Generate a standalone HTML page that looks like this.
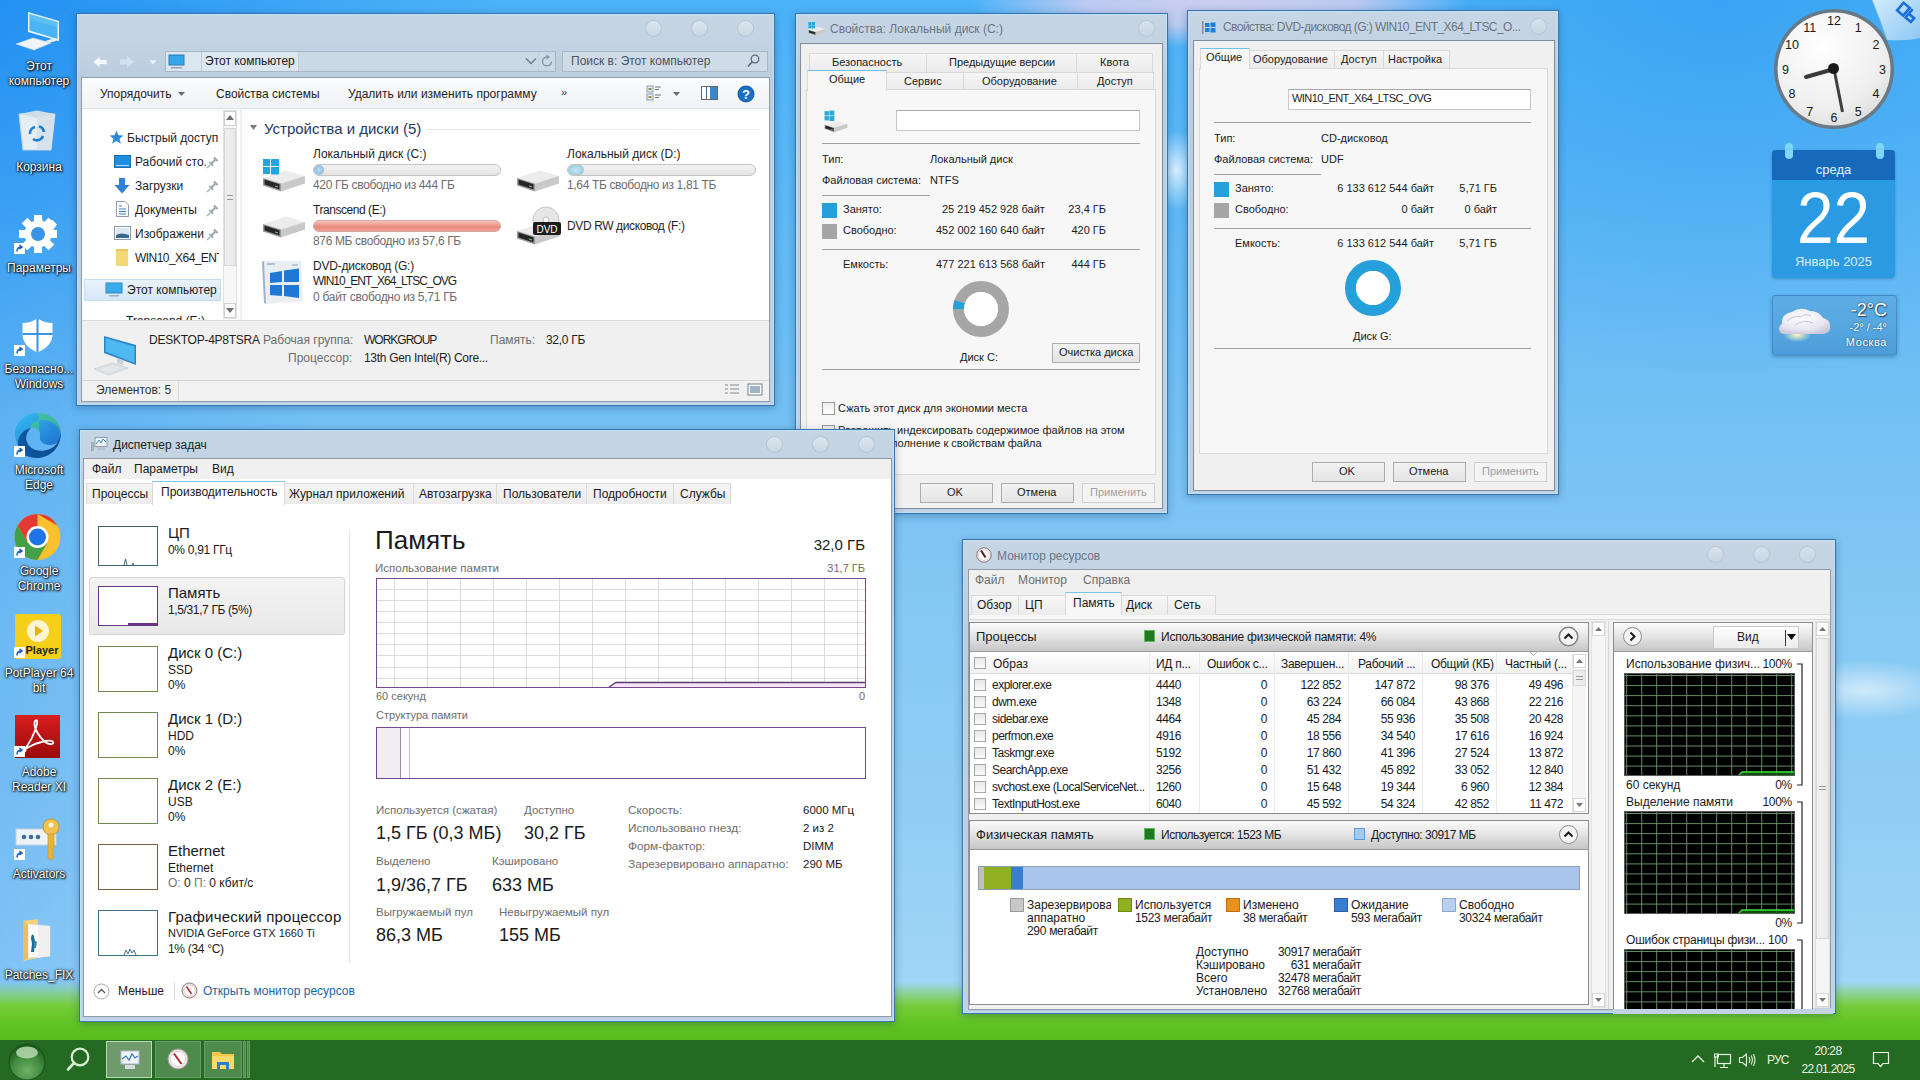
<!DOCTYPE html>
<html><head><meta charset="utf-8">
<style>
*{box-sizing:border-box;margin:0;padding:0}
html,body{width:1920px;height:1080px;overflow:hidden}
body{position:relative;font-family:"Liberation Sans",sans-serif;font-size:12px;color:#1a1a1a;
background:radial-gradient(ellipse 250px 48px at 1220px 0px,rgba(206,206,240,1) 0,rgba(206,206,240,.85) 55%,rgba(206,206,240,0) 100%),radial-gradient(ellipse 30px 40px at 1176px 170px,rgba(255,255,255,.75),rgba(255,255,255,0)),radial-gradient(ellipse 90px 30px at 1865px 690px,rgba(255,255,255,.6),rgba(255,255,255,0)),radial-gradient(ellipse 500px 420px at 0px 0px,rgba(0,115,238,.42),rgba(0,115,238,0)),radial-gradient(ellipse 420px 380px at 1720px 0px,rgba(20,135,235,.32),rgba(20,135,235,0)),linear-gradient(90deg,rgba(0,120,240,.2) 0px,rgba(0,120,240,0) 320px),linear-gradient(180deg,#4ab2f8 0px,#5cb8f6 200px,#74c0f4 420px,#84c8f4 600px,#90cdf4 800px,#a0d6f8 985px,#a0d6f8 1040px)}
.a{position:absolute}
.t{position:absolute;white-space:nowrap;line-height:1}
.win{position:absolute;border:1px solid #3f70a8;background:linear-gradient(180deg,#c7d6e5 0,#c3d3e3 30px,#bccde0 62px,#c0d1e3 100%);
 box-shadow:0 0 0 1px rgba(185,230,255,.85) inset,0 2px 8px rgba(0,40,90,.3)}
.cbtn{position:absolute;width:17px;height:17px;border-radius:50%;border:1px solid #b4c3d2;background:linear-gradient(#dde6ef,#c9d6e3)}
.ttl{position:absolute;font-size:12px;color:#3a3a3a;white-space:nowrap}
.dicon{position:absolute;width:78px;text-align:center;color:#fff;font-size:12px;line-height:15px;text-shadow:0 0 3px rgba(0,0,0,.9),1px 1px 2px #000,0 0 1px #000}
</style></head><body>

<!-- grass texture band -->
<div class="a" style="left:0;top:982px;width:1920px;height:58px;background:linear-gradient(180deg,rgba(140,210,120,0) 0,rgba(130,210,100,.7) 12px,#74cc38 24px,#62c424 42px,#58bc1c 58px)"></div>


<!-- desktop icons -->
<svg class="a" style="left:15px;top:11px" width="45" height="42" viewBox="0 0 45 42"><path d="M13 1 L44 10 L44 30 L13 21Z" fill="#e8f4fc"/><path d="M14.5 3 L42.5 11 L42.5 28 L14.5 19.5Z" fill="#4ab4f4"/><path d="M14.5 3 L42.5 11 L42.5 16 L14.5 9Z" fill="#6cc6f8" opacity=".6"/><path d="M30 30 L40 27 L44 29 L34 32Z" fill="#e9eef2"/><path d="M1 33 L18 27 L36 32 L19 39Z" fill="#f2f5f8" stroke="#cdd5dc" stroke-width="0.6"/></svg>
<div class="dicon" style="left:0;top:59.0px">Этот</div><div class="dicon" style="left:0;top:73.5px">компьютер</div>
<svg class="a" style="left:18px;top:110px" width="38" height="41" viewBox="0 0 38 41"><path d="M1 4 L37 4 L33 40 L5 40Z" fill="#e6eef5" stroke="#c4d3df" stroke-width="1"/><path d="M1 4 L19 0.5 L37 4 L19 8Z" fill="#cfdde8"/><path d="M19 8 L37 4 L33 40 L19 40Z" fill="#d7e3ec"/><g fill="none" stroke="#1e7fd0" stroke-width="2.6"><path d="M12 24 A6.5 6.5 0 0 1 17 17"/><path d="M21 16.5 A6.5 6.5 0 0 1 26 22"/><path d="M25 26 A6.5 6.5 0 0 1 15 29"/></g></svg>
<div class="dicon" style="left:0;top:160.0px">Корзина</div>
<svg class="a" style="left:18px;top:214px" width="40" height="40" viewBox="0 0 40 40"><g transform="translate(20,20)"><path d="M-3.5 -19 L3.5 -19 L4.5 -13 L9 -11 L14 -14.5 L19 -9.5 L15.5 -4.5 L17.5 0 L17.5 0" fill="#fff"/><circle r="13.5" fill="#fff"/><g fill="#fff"><rect x="-4" y="-19" width="8" height="9"/><rect x="-4" y="-19" width="8" height="9" transform="rotate(45)"/><rect x="-4" y="-19" width="8" height="9" transform="rotate(90)"/><rect x="-4" y="-19" width="8" height="9" transform="rotate(135)"/><rect x="-4" y="-19" width="8" height="9" transform="rotate(180)"/><rect x="-4" y="-19" width="8" height="9" transform="rotate(225)"/><rect x="-4" y="-19" width="8" height="9" transform="rotate(270)"/><rect x="-4" y="-19" width="8" height="9" transform="rotate(315)"/></g><circle r="7" fill="#3a93e4"/></g></svg>
<svg class="a" style="left:14px;top:243px" width="11" height="11" viewBox="0 0 11 11"><rect x="0" y="0" width="11" height="11" fill="#fff"/><path d="M3 8.5 Q3 4 7.5 4 M5.5 2 L8 4 L5.5 6" fill="none" stroke="#1a5fb4" stroke-width="1.5"/></svg><div class="dicon" style="left:0;top:261.0px">Параметры</div>
<svg class="a" style="left:22px;top:318px" width="31" height="35" viewBox="0 0 31 35"><path d="M15.5 0.5 Q23 5 30.5 5 L30.5 16 Q30.5 28 15.5 34.5 Q0.5 28 0.5 16 L0.5 5 Q8 5 15.5 0.5Z" fill="#fff"/><path d="M15.5 0.5 V34.5 M0.5 16 H30.5" stroke="#3a93e4" stroke-width="2"/></svg>
<svg class="a" style="left:14px;top:345px" width="11" height="11" viewBox="0 0 11 11"><rect x="0" y="0" width="11" height="11" fill="#fff"/><path d="M3 8.5 Q3 4 7.5 4 M5.5 2 L8 4 L5.5 6" fill="none" stroke="#1a5fb4" stroke-width="1.5"/></svg><div class="dicon" style="left:0;top:362.0px">Безопасно...</div><div class="dicon" style="left:0;top:376.5px">Windows</div>
<svg class="a" style="left:13px;top:411px" width="50" height="49" viewBox="0 0 50 49"><defs><linearGradient id="eg1" x1="0" y1="0" x2="1" y2="1"><stop offset="0" stop-color="#35c1f1"/><stop offset="1" stop-color="#1e6fd0"/></linearGradient><linearGradient id="eg2" x1="0" y1="0" x2="1" y2="0"><stop offset="0" stop-color="#0c59a4"/><stop offset="1" stop-color="#114a8b"/></linearGradient></defs><path d="M25 2 C38 2 48 11 48 23 C48 30 43 34 37 34 C30 34 26 30 27 25 C28 20 24 16 18 17 C10 18 4 26 5 34 C2 29 2 24 2 22 C3 10 13 2 25 2Z" fill="url(#eg1)"/><path d="M48 23 C47 38 36 47 24 47 C12 47 4 40 5 34 C4 26 10 18 18 17 C14 21 12 26 14 31 C17 39 27 42 37 38 C42 36 46 31 48 23Z" fill="url(#eg2)"/><path d="M25 2 C38 2 48 11 48 23 C46 14 38 9 30 9 C22 9 17 13 18 17 C24 16 28 20 27 25" fill="#4fd36a" opacity=".55"/></svg>
<svg class="a" style="left:14px;top:446px" width="11" height="11" viewBox="0 0 11 11"><rect x="0" y="0" width="11" height="11" fill="#fff"/><path d="M3 8.5 Q3 4 7.5 4 M5.5 2 L8 4 L5.5 6" fill="none" stroke="#1a5fb4" stroke-width="1.5"/></svg><div class="dicon" style="left:0;top:463.0px">Microsoft</div><div class="dicon" style="left:0;top:477.5px">Edge</div>
<svg class="a" style="left:13px;top:513px" width="49" height="48" viewBox="0 0 48 48"><circle cx="24" cy="24" r="23" fill="#fbc02d"/><path d="M24 1 A23 23 0 0 1 43.9 12.5 L24 12.5 Z M24 1 A23 23 0 0 0 4.1 12.5 L14 29.5 L24 12.5 L43.9 12.5" fill="#e53935"/><path d="M4.1 12.5 A23 23 0 0 0 24 47 L34 29.5 L24 35.5 L14 29.5Z" fill="#43a047"/><circle cx="24" cy="24" r="11" fill="#fff"/><circle cx="24" cy="24" r="8.5" fill="#1e73e8"/></svg>
<svg class="a" style="left:14px;top:547px" width="11" height="11" viewBox="0 0 11 11"><rect x="0" y="0" width="11" height="11" fill="#fff"/><path d="M3 8.5 Q3 4 7.5 4 M5.5 2 L8 4 L5.5 6" fill="none" stroke="#1a5fb4" stroke-width="1.5"/></svg><div class="dicon" style="left:0;top:564.0px">Google</div><div class="dicon" style="left:0;top:578.5px">Chrome</div>
<svg class="a" style="left:15px;top:614px" width="46" height="45" viewBox="0 0 46 45"><rect x="0" y="0" width="46" height="45" rx="3" fill="#f5cf1a"/><circle cx="23" cy="17" r="11" fill="#fff6d0"/><path d="M20 11.5 L28 17 L20 22.5Z" fill="#e6b400"/><text x="27" y="40" text-anchor="middle" font-family="Liberation Sans" font-weight="bold" font-size="11" fill="#222">Player</text></svg>
<svg class="a" style="left:14px;top:647px" width="11" height="11" viewBox="0 0 11 11"><rect x="0" y="0" width="11" height="11" fill="#fff"/><path d="M3 8.5 Q3 4 7.5 4 M5.5 2 L8 4 L5.5 6" fill="none" stroke="#1a5fb4" stroke-width="1.5"/></svg><div class="dicon" style="left:0;top:666.0px">PotPlayer 64</div><div class="dicon" style="left:0;top:680.5px">bit</div>
<svg class="a" style="left:15px;top:715px" width="45" height="43" viewBox="0 0 45 43"><defs><linearGradient id="ag" x1="0" y1="0" x2="0" y2="1"><stop offset="0" stop-color="#d81e1e"/><stop offset="1" stop-color="#9a0a0a"/></linearGradient></defs><rect x="0" y="0" width="45" height="43" fill="url(#ag)"/><path d="M8 36 C14 30 20 18 22 9 C23 4 20 4 19.5 8 C19 13 24 22 30 27 C34 30 39 30 38 27 C37 24 24 26 12 33 C7 36 8 39 11 35" fill="none" stroke="#fff" stroke-width="1.8"/></svg>
<svg class="a" style="left:14px;top:746px" width="11" height="11" viewBox="0 0 11 11"><rect x="0" y="0" width="11" height="11" fill="#fff"/><path d="M3 8.5 Q3 4 7.5 4 M5.5 2 L8 4 L5.5 6" fill="none" stroke="#1a5fb4" stroke-width="1.5"/></svg><div class="dicon" style="left:0;top:765.0px">Adobe</div><div class="dicon" style="left:0;top:779.5px">Reader XI</div>
<svg class="a" style="left:15px;top:818px" width="46" height="42" viewBox="0 0 46 42"><rect x="1" y="11" width="40" height="16" fill="#eef3f7" stroke="#c5d2dc"/><circle cx="9" cy="19" r="2.3" fill="#3a6d9a"/><circle cx="16" cy="19" r="2.3" fill="#3a6d9a"/><circle cx="23" cy="19" r="2.3" fill="#3a6d9a"/><circle cx="36" cy="9" r="8" fill="#f1c24f" stroke="#c89b2a"/><circle cx="36" cy="7" r="2.5" fill="#fff6d8"/><path d="M33 16 L33 40 L36 42 L39 39 L37 37 L39 34 L37 32 L39 30 L39 16Z" fill="#e9b43b" stroke="#c89b2a" stroke-width="0.8"/></svg>
<svg class="a" style="left:14px;top:849px" width="11" height="11" viewBox="0 0 11 11"><rect x="0" y="0" width="11" height="11" fill="#fff"/><path d="M3 8.5 Q3 4 7.5 4 M5.5 2 L8 4 L5.5 6" fill="none" stroke="#1a5fb4" stroke-width="1.5"/></svg><div class="dicon" style="left:0;top:867.0px">Activators</div>
<svg class="a" style="left:20px;top:918px" width="34" height="44" viewBox="0 0 34 44"><path d="M3 3 L18 1 L18 40 L3 43Z" fill="#f3d27a"/><path d="M8 6 L30 8 L30 38 L8 40Z" fill="#fbfbfb" stroke="#d8d8d8" stroke-width=".6"/><path d="M18 8 L30 8 L30 38 L18 40Z" fill="#f0f0f0"/><path d="M11 20 Q12 14 14 18 L15 24 L14 34 L11 34 L12 26Z" fill="#1e6e90"/><path d="M14 22 L17 24 L16 30 L14 30Z" fill="#2f8ab0"/><path d="M3 3 L8 6 L8 40 L3 43Z" fill="#e8c259"/></svg>
<div class="dicon" style="left:0;top:968.0px">Patches_FIX</div>


<!-- widgets -->
<svg class="a" style="left:1773px;top:8px" width="122" height="122" viewBox="-1 -1 122 122">
 <defs><radialGradient id="cf" cx="0.4" cy="0.3" r="0.8"><stop offset="0" stop-color="#ffffff"/><stop offset="0.7" stop-color="#eeeeee"/><stop offset="1" stop-color="#d8d8d8"/></radialGradient></defs>
 <circle cx="60" cy="60" r="60" fill="#6d737a" opacity=".9"/>
 <circle cx="60" cy="60" r="56.5" fill="url(#cf)"/>
 <g font-family="Liberation Sans" font-size="12.5" fill="#1a1a1a"><text x="84.2" y="22.5" text-anchor="middle">1</text><text x="102.0" y="40.2" text-anchor="middle">2</text><text x="108.5" y="64.5" text-anchor="middle">3</text><text x="102.0" y="88.7" text-anchor="middle">4</text><text x="84.2" y="106.5" text-anchor="middle">5</text><text x="60.0" y="113.0" text-anchor="middle">6</text><text x="35.7" y="106.5" text-anchor="middle">7</text><text x="18.0" y="88.8" text-anchor="middle">8</text><text x="11.5" y="64.5" text-anchor="middle">9</text><text x="18.0" y="40.2" text-anchor="middle">10</text><text x="35.7" y="22.5" text-anchor="middle">11</text><text x="60.0" y="16.0" text-anchor="middle">12</text></g>
 <path d="M60 60 L32 68" stroke="#3a3a3a" stroke-width="4" stroke-linecap="round"/>
 <path d="M60 60 L68.5 103" stroke="#3f3f3f" stroke-width="3"/>
 <circle cx="59.5" cy="59.5" r="5.5" fill="#1a1a1a"/>
</svg>
<!-- corner curl -->
<svg class="a" style="left:1870px;top:0" width="50" height="44" viewBox="0 0 50 44"><defs><linearGradient id="cg" x1="0" y1="0" x2="1" y2="1"><stop offset="0" stop-color="#d2ecfc"/><stop offset=".6" stop-color="#a9d6f6"/><stop offset="1" stop-color="#8cc8f4"/></linearGradient></defs><path d="M2 0 L50 0 L50 38 Q40 41 17 40 Q10 20 2 0Z" fill="url(#cg)"/><path d="M2 0 Q10 20 17 40" fill="none" stroke="#7fb2d8" stroke-width="1"/><g transform="translate(38,13) rotate(40)" fill="none" stroke="#1a6fe0" stroke-width="2.6"><rect x="-10" y="-5" width="8" height="10"/><path d="M1 -6 L1 5 L8 5 L8 0 L1 0"/></g></svg>

<!-- calendar -->
<div class="a" style="left:1785px;top:143px;width:8px;height:16px;border-radius:4px;background:#7fd6f5"></div>
<div class="a" style="left:1876px;top:143px;width:8px;height:16px;border-radius:4px;background:#7fd6f5"></div>
<div class="a" style="left:1772px;top:150px;width:123px;height:128px;border-radius:4px;background:#2a9be3;box-shadow:0 1px 3px rgba(0,60,120,.35);overflow:hidden">
 <div class="a" style="left:0;top:0;width:123px;height:30px;background:#1769bb"></div>
</div>
<div class="a" style="left:1785px;top:150px;width:8px;height:9px;border-radius:0 0 4px 4px;background:#7fd6f5"></div>
<div class="a" style="left:1876px;top:150px;width:8px;height:9px;border-radius:0 0 4px 4px;background:#7fd6f5"></div>
<div class="t" style="left:1772px;top:163px;width:123px;text-align:center;color:#e3f2fd;font-size:13px">среда</div>
<svg class="a" style="left:1772px;top:180px" width="123" height="70" viewBox="0 0 123 70"><text x="61.5" y="63" text-anchor="middle" font-family="Liberation Sans" font-size="73" fill="#fff" stroke="#2a9be3" stroke-width="2.2" paint-order="stroke" transform="translate(61.5,0) scale(.9,1) translate(-61.5,0)" style="paint-order:stroke fill">22</text></svg>
<div class="t" style="left:1772px;top:255px;width:123px;text-align:center;color:#d6eefc;font-size:13px">Январь 2025</div>

<!-- weather -->
<div class="a" style="left:1772px;top:295px;width:125px;height:60px;border-radius:3px;border:1px solid rgba(50,110,175,.45);background:linear-gradient(#5eace4,#55a6e0 60%,#4e9cd8);box-shadow:0 2px 4px rgba(0,50,100,.35)"></div>
<svg class="a" style="left:1777px;top:305px" width="56" height="38" viewBox="0 0 56 38"><defs><radialGradient id="wc" cx=".45" cy=".35" r=".7"><stop offset="0" stop-color="#ffffff"/><stop offset=".7" stop-color="#e6e4f0"/><stop offset="1" stop-color="#c8c6d8"/></radialGradient><radialGradient id="ws" cx=".5" cy=".5" r=".5"><stop offset="0" stop-color="#fff8c0"/><stop offset="1" stop-color="#fff8c0" stop-opacity="0"/></radialGradient></defs><ellipse cx="20" cy="30" rx="14" ry="7" fill="url(#ws)"/><path d="M3 27 Q0 22 5 19 Q4 9 15 7 Q24 1 33 6 Q42 6 46 13 Q54 15 53 22 Q54 28 46 29 L8 29 Q4 29 3 27Z" fill="url(#wc)"/><path d="M10 16 Q16 10 24 12 Q28 8 34 11 M18 20 Q26 14 36 18" fill="none" stroke="#b9b6cc" stroke-width="1" opacity=".8"/></svg>
<div class="t" style="left:1836px;top:301px;width:51px;text-align:right;color:#fff;font-size:18px;text-shadow:0 0 2px rgba(0,30,60,.8),1px 1px 1px rgba(0,30,60,.6)">-2°C</div>
<div class="t" style="left:1826px;top:322px;width:61px;text-align:right;color:#fff;font-size:11px;text-shadow:0 0 2px rgba(0,30,60,.8)">-2° / -4°</div>
<div class="t" style="left:1826px;top:337px;width:61px;text-align:right;color:#fff;font-size:11px;letter-spacing:.6px;text-shadow:0 0 2px rgba(0,30,60,.8)">Москва</div>

<!-- Taskbar -->
<div class="a" id="taskbar" style="left:0;top:1040px;width:1920px;height:40px;background:#246a22"></div>
<svg class="a" style="left:8px;top:1043px" width="38" height="38" viewBox="0 0 38 38"><defs><radialGradient id="orb" cx="0.5" cy="0.75" r="0.7"><stop offset="0" stop-color="#6fb06a"/><stop offset="0.6" stop-color="#3f8a3c"/><stop offset="1" stop-color="#1d5a1c"/></radialGradient></defs><circle cx="19" cy="19" r="18" fill="url(#orb)" stroke="#1a4f19" stroke-width="1"/><ellipse cx="19" cy="9.5" rx="11" ry="6" fill="#b9d9b0" opacity=".85"/></svg>
<svg class="a" style="left:64px;top:1045px" width="28" height="28" viewBox="0 0 28 28"><circle cx="16" cy="12" r="8.3" fill="none" stroke="#d9f0d2" stroke-width="2.2"/><path d="M10 18 L4 24.5" stroke="#d9f0d2" stroke-width="2.6" stroke-linecap="round"/></svg>
<div class="a" style="left:106px;top:1041px;width:46px;height:37px;background:#6f9b6c;border:1px solid #b5deae"></div>
<svg class="a" style="left:118px;top:1049px" width="24" height="22" viewBox="0 0 24 22"><rect x="3" y="2" width="18" height="13" fill="#eef4f8" stroke="#a9bccb"/><path d="M4 10 L8 7 L11 11 L14 5 L17 9 L20 7" fill="none" stroke="#3a78c0" stroke-width="1.2"/><rect x="7" y="16" width="10" height="4" fill="#d6dde2"/></svg>
<div class="a" style="left:155px;top:1041px;width:46px;height:37px;background:#4e8a4b;border:1px solid #67a064"></div>
<svg class="a" style="left:167px;top:1048px" width="22" height="22" viewBox="0 0 22 22"><circle cx="11" cy="11" r="10" fill="#f1e4e4" stroke="#a89a9a"/><circle cx="11" cy="11" r="7.5" fill="#fff" stroke="#d0c2c2" stroke-width=".6"/><path d="M7 5.5 L14.5 16" stroke="#b3252b" stroke-width="2"/></svg>
<div class="a" style="left:204px;top:1041px;width:38px;height:37px;background:#4e8a4b;border:1px solid #67a064"></div>
<svg class="a" style="left:211px;top:1049px" width="24" height="22" viewBox="0 0 24 22"><path d="M1 3 L9 3 L11 5 L23 5 L23 20 L1 20Z" fill="#f5c84c"/><rect x="1" y="7" width="22" height="13" fill="#fbd96a"/><path d="M6 20 L6 13 L18 13 L18 20 L15 20 L15 16 L9 16 L9 20Z" fill="#2b7fd0"/></svg>
<div class="a" style="left:243px;top:1041px;width:3px;height:37px;background:#4e8a4b;border:1px solid #67a064"></div>
<div class="a" style="left:247px;top:1041px;width:3px;height:37px;background:#4e8a4b;border:1px solid #67a064"></div>
<svg class="a" style="left:1690px;top:1054px" width="16" height="10" viewBox="0 0 16 10"><path d="M2 8 L8 2 L14 8" fill="none" stroke="#e6f5e0" stroke-width="1.4"/></svg>
<svg class="a" style="left:1714px;top:1053px" width="18" height="16" viewBox="0 0 18 16"><rect x="3.5" y="1.5" width="13" height="9" fill="none" stroke="#e6f5e0" stroke-width="1.2"/><path d="M10 10.5 V14 M6 14.5 H14 M1 3 V14" stroke="#e6f5e0" stroke-width="1.2"/><rect x="0.5" y="1" width="4" height="3" fill="none" stroke="#e6f5e0" stroke-width="1"/></svg>
<svg class="a" style="left:1738px;top:1052px" width="18" height="16" viewBox="0 0 18 16"><path d="M1.5 5.5 H4.5 L8.5 2 V14 L4.5 10.5 H1.5Z" fill="none" stroke="#e6f5e0" stroke-width="1.1"/><path d="M11 5 Q12.5 8 11 11 M13.2 3.5 Q15.5 8 13.2 12.5 M15.4 2 Q18.5 8 15.4 14" fill="none" stroke="#e6f5e0" stroke-width="1.1"/></svg>
<div class="t" style="left:1767px;top:1054px;color:#eaf6e5;font-size:12px;letter-spacing:-0.8px">РУС</div>
<div class="t" style="left:1800px;top:1045px;width:56px;text-align:center;color:#eaf6e5;font-size:12px;letter-spacing:-0.6px">20:28</div>
<div class="t" style="left:1798px;top:1063px;width:60px;text-align:center;color:#eaf6e5;font-size:12px;letter-spacing:-0.7px">22.01.2025</div>
<svg class="a" style="left:1872px;top:1051px" width="18" height="18" viewBox="0 0 18 18"><path d="M1.5 1.5 H16.5 V12.5 H11 L8.5 15.5 L6 12.5 H1.5Z" fill="none" stroke="#e6f5e0" stroke-width="1.2"/></svg>



<!-- Explorer -->
<div class="win" id="explorer" style="left:76px;top:13px;width:699px;height:393px"></div>
<div class="cbtn" style="left:645px;top:20px"></div>
<div class="cbtn" style="left:691px;top:20px"></div>
<div class="cbtn" style="left:737px;top:20px"></div>
<!-- nav arrows -->
<svg class="a" style="left:92px;top:54px" width="70" height="16" viewBox="0 0 70 16">
 <path d="M1 8 L8 2 L8 5.5 L15 5.5 L15 10.5 L8 10.5 L8 14 Z" fill="#f4f7fa" stroke="#c5d2df" stroke-width="0.8"/>
 <path d="M42 8 L35 2 L35 5.5 L28 5.5 L28 10.5 L35 10.5 L35 14 Z" fill="#d5e0ea"/>
 <path d="M57 6 L65 6 L61 11 Z" fill="#eef3f8" stroke="#c0cedb" stroke-width="0.6"/>
</svg>
<!-- address bar -->
<div class="a" style="left:165px;top:51px;width:391px;height:21px;border:1px solid #a9b8c7;background:#cbd8e5"></div>
<div class="a" style="left:166px;top:52px;width:35px;height:19px;background:#dbe6f0"></div>
<svg class="a" style="left:168px;top:54px" width="18" height="15" viewBox="0 0 18 15"><rect x="1" y="1" width="15" height="10" fill="#33a7e8" stroke="#2a7fb5" stroke-width="1"/><rect x="3" y="13" width="11" height="1.5" fill="#8fa3b5"/></svg>
<div class="a" style="left:201px;top:52px;width:1px;height:19px;background:#c1cfdc"></div>
<div class="a" style="left:202px;top:52px;width:96px;height:19px;background:#dde7f0"></div>
<div class="a" style="left:298px;top:52px;width:1px;height:19px;background:#c1cfdc"></div>
<div class="t" style="left:205px;top:55px;color:#222">Этот компьютер</div>
<svg class="a" style="left:525px;top:57px" width="12" height="8" viewBox="0 0 12 8"><path d="M1 1.5 L6 6.5 L11 1.5" fill="none" stroke="#6b7a88" stroke-width="1.4"/></svg>
<div class="a" style="left:538px;top:52px;width:1px;height:19px;background:#c1cfdc"></div>
<svg class="a" style="left:541px;top:54px" width="13" height="14" viewBox="0 0 13 14"><path d="M10.5 7.5 A4.5 4.5 0 1 1 6.5 3" fill="none" stroke="#8a96a2" stroke-width="1.3"/><path d="M5.5 0.5 L9 3 L5.5 5.5 Z" fill="#8a96a2"/></svg>
<!-- search -->
<div class="a" style="left:562px;top:51px;width:206px;height:21px;border:1px solid #a9b8c7;background:#cfdbe7"></div>
<div class="t" style="left:571px;top:55px;color:#4c5560">Поиск в: Этот компьютер</div>
<svg class="a" style="left:747px;top:54px" width="13" height="14" viewBox="0 0 13 14"><circle cx="8" cy="5" r="3.8" fill="none" stroke="#5d6a77" stroke-width="1.3"/><path d="M5.3 7.8 L1 12.5" stroke="#5d6a77" stroke-width="1.6"/></svg>
<!-- content -->
<div class="a" style="left:81px;top:77px;width:689px;height:325px;background:#fff;border:1px solid #8e9ba8"></div>
<div class="a" style="left:82px;top:79px;width:687px;height:30px;background:linear-gradient(#fbfcfd,#f0f2f5);border-bottom:1px solid #dfe3e8"></div>
<div class="t" style="left:100px;top:88px;color:#1e1e1e">Упорядочить</div>
<svg class="a" style="left:178px;top:92px" width="7" height="4"><path d="M0 0 L7 0 L3.5 4Z" fill="#6a6a6a"/></svg>
<div class="t" style="left:216px;top:88px;color:#1e1e1e">Свойства системы</div>
<div class="t" style="left:348px;top:88px;color:#1e1e1e">Удалить или изменить программу</div>
<div class="t" style="left:561px;top:87px;color:#333;font-size:11px">&#187;</div>
<svg class="a" style="left:646px;top:85px" width="17" height="17" viewBox="0 0 17 17"><rect x="1" y="1" width="6" height="6" fill="#e8eef4" stroke="#8c9bab"/><rect x="1" y="9" width="6" height="6" fill="#e8eef4" stroke="#8c9bab"/><rect x="2.5" y="3" width="3" height="2" fill="#6d9c4f"/><rect x="2.5" y="11" width="3" height="2" fill="#b08a3c"/><path d="M9 2h6M9 4.5h4M9 10h6M9 12.5h4" stroke="#6b7886" stroke-width="1"/></svg>
<svg class="a" style="left:673px;top:92px" width="7" height="4"><path d="M0 0 L7 0 L3.5 4Z" fill="#6a6a6a"/></svg>
<svg class="a" style="left:701px;top:86px" width="17" height="15" viewBox="0 0 17 15"><rect x="0.5" y="0.5" width="16" height="13" fill="#fff" stroke="#5d6b79"/><rect x="9" y="1" width="7" height="12" fill="#3d86c6"/><rect x="5" y="1" width="1" height="12" fill="#5d6b79"/></svg>
<svg class="a" style="left:737px;top:85px" width="18" height="18" viewBox="0 0 18 18"><circle cx="9" cy="9" r="8.5" fill="#1565b0"/><circle cx="9" cy="9" r="7.5" fill="#1a6fc0"/><text x="9" y="13.5" text-anchor="middle" font-family="Liberation Sans" font-weight="bold" font-size="13" fill="#fff">?</text></svg>

<!-- nav pane -->
<div class="a" style="left:223px;top:110px;width:14px;height:209px;border:1px solid #e2e2e2;background:#f7f7f7"></div>
<div class="a" style="left:224px;top:111px;width:12px;height:15px;border:1px solid #d0d0d0;background:#fdfdfd"></div>
<svg class="a" style="left:226px;top:115px" width="8" height="5"><path d="M0 5 L8 5 L4 0Z" fill="#6f6f6f"/></svg>
<div class="a" style="left:224px;top:128px;width:12px;height:138px;border:1px solid #d6d6d6;background:linear-gradient(90deg,#f0f0f0,#e8e8e8)"></div>
<div class="a" style="left:227px;top:195px;width:6px;height:5px;border-top:1px solid #999;border-bottom:1px solid #999"></div>
<div class="a" style="left:224px;top:303px;width:12px;height:15px;border:1px solid #d0d0d0;background:#fdfdfd"></div>
<svg class="a" style="left:226px;top:308px" width="8" height="5"><path d="M0 0 L8 0 L4 5Z" fill="#6f6f6f"/></svg>
<div class="a" style="left:240px;top:109px;width:2px;height:211px;background:#eceff2"></div>

<svg class="a" style="left:109px;top:130px" width="15" height="15" viewBox="0 0 15 15"><path d="M7.5 0.5 L9.4 5.3 L14.5 5.6 L10.5 8.8 L11.9 13.8 L7.5 11 L3.1 13.8 L4.5 8.8 L0.5 5.6 L5.6 5.3Z" fill="#2d8ad6"/></svg>
<div class="t" style="left:127px;top:132px;color:#1e1e1e">Быстрый доступ</div>
<svg class="a" style="left:114px;top:155px" width="17" height="14" viewBox="0 0 17 14"><rect x="0.5" y="0.5" width="16" height="12" fill="#1f8ee0" stroke="#1a6fb0"/><rect x="2" y="10" width="13" height="1" fill="#b9dcf5"/></svg>
<div class="t" style="left:135px;top:156px;color:#1e1e1e">Рабочий сто.</div>
<svg class="a" style="left:114px;top:178px" width="16" height="16" viewBox="0 0 16 16"><path d="M5 0 L11 0 L11 7 L15.5 7 L8 15.5 L0.5 7 L5 7Z" fill="#2f82d3"/></svg>
<div class="t" style="left:135px;top:180px;color:#1e1e1e">Загрузки</div>
<svg class="a" style="left:116px;top:201px" width="13" height="16" viewBox="0 0 13 16"><path d="M0.5 0.5 L9 0.5 L12.5 4 L12.5 15.5 L0.5 15.5Z" fill="#fff" stroke="#8a9aab"/><path d="M3 5h3M3 8h7M3 10.5h7M3 13h7" stroke="#3c7fc2" stroke-width="1"/></svg>
<div class="t" style="left:135px;top:204px;color:#1e1e1e">Документы</div>
<svg class="a" style="left:114px;top:226px" width="17" height="14" viewBox="0 0 17 14"><rect x="0.5" y="0.5" width="16" height="13" fill="#fff" stroke="#8a9aab"/><rect x="2" y="2" width="13" height="10" fill="#d8e8f2"/><path d="M2 9 Q7 6 15 9 L15 12 L2 12Z" fill="#3a6a8a"/></svg>
<div class="t" style="left:135px;top:228px;color:#1e1e1e">Изображени</div>
<svg class="a" style="left:116px;top:249px" width="12" height="17" viewBox="0 0 12 17"><rect x="0" y="0" width="12" height="17" fill="#f3d87a"/><rect x="0" y="0" width="12" height="2" fill="#e8c659"/></svg>
<div class="a" style="left:135px;top:249px;width:84px;height:18px;overflow:hidden"><div class="t" style="left:0;top:3px;color:#1e1e1e;letter-spacing:-0.55px">WIN10_X64_ENT.</div></div>
<svg class="a" style="left:206px;top:155px" width="14" height="96" viewBox="0 0 14 96"><g transform="translate(0,0)"><path d="M8.5 1.5 L12.5 5.5 L11 6.5 L9.5 6 L7 8.5 L7.5 10.5 L6.5 11.5 L2.5 7.5 L3.5 6.5 L5.5 7 L8 4.5 L7.5 3Z" fill="#a3abb3"/><path d="M4.5 9.5 L1 13" stroke="#a3abb3" stroke-width="1.2"/></g><g transform="translate(0,24)"><path d="M8.5 1.5 L12.5 5.5 L11 6.5 L9.5 6 L7 8.5 L7.5 10.5 L6.5 11.5 L2.5 7.5 L3.5 6.5 L5.5 7 L8 4.5 L7.5 3Z" fill="#a3abb3"/><path d="M4.5 9.5 L1 13" stroke="#a3abb3" stroke-width="1.2"/></g><g transform="translate(0,48)"><path d="M8.5 1.5 L12.5 5.5 L11 6.5 L9.5 6 L7 8.5 L7.5 10.5 L6.5 11.5 L2.5 7.5 L3.5 6.5 L5.5 7 L8 4.5 L7.5 3Z" fill="#a3abb3"/><path d="M4.5 9.5 L1 13" stroke="#a3abb3" stroke-width="1.2"/></g><g transform="translate(0,72)"><path d="M8.5 1.5 L12.5 5.5 L11 6.5 L9.5 6 L7 8.5 L7.5 10.5 L6.5 11.5 L2.5 7.5 L3.5 6.5 L5.5 7 L8 4.5 L7.5 3Z" fill="#a3abb3"/><path d="M4.5 9.5 L1 13" stroke="#a3abb3" stroke-width="1.2"/></g></svg>
<div class="a" style="left:84px;top:279px;width:137px;height:22px;border:1px solid #c5dbee;background:linear-gradient(#e9f2fa,#d6e7f6)"></div>
<svg class="a" style="left:105px;top:282px" width="18" height="16" viewBox="0 0 18 16"><rect x="1" y="1" width="16" height="10" fill="#39aaea" stroke="#2d8ac5"/><rect x="4" y="13" width="10" height="1.5" fill="#9fb0bf"/></svg>
<div class="t" style="left:127px;top:284px;color:#1e1e1e">Этот компьютер</div>
<div class="a" style="left:84px;top:314px;width:138px;height:6px;overflow:hidden"><div class="t" style="left:42px;top:1px;color:#1e1e1e">Transcend (E:)</div></div>

<!-- content pane -->
<svg class="a" style="left:250px;top:125px" width="7" height="5"><path d="M0 0 L7 0 L3.5 5Z" fill="#7a7a7a"/></svg>
<div class="t" style="left:264px;top:121px;font-size:15px;color:#1e3a5f">Устройства и диски (5)</div>
<div class="a" style="left:427px;top:129px;width:333px;height:1px;background:linear-gradient(90deg,#e2e6ea,#eef1f4)"></div>

<!-- drives -->
<svg class="a" style="left:262px;top:159px" width="44" height="34" viewBox="0 0 44 34"><g transform="translate(0,10)"><path d="M1 9 L24 1.5 L43 7 L19 14.5 Z" fill="#ececec"/><path d="M19 14.5 L43 7 L43 14.5 L19 22.5 Z" fill="#c9c9c9"/><path d="M1 9 L19 14.5 L19 22.5 L1 16.5 Z" fill="#9a9a9a"/><path d="M2.5 10.5 L17.5 15.2 L17.5 20.5 L2.5 15.5 Z" fill="#262626"/><path d="M13 16.5 L16 17.5 L16 18.5 L13 17.5Z" fill="#7fcf7f"/></g><rect x="1" y="0" width="7" height="7" fill="#1ca6e3"/><rect x="9" y="-0.5" width="8" height="7.5" fill="#1ca6e3"/><rect x="1" y="8" width="7" height="7" fill="#1ca6e3"/><rect x="9" y="8" width="8" height="7.5" fill="#1ca6e3"/></svg>
<div class="t" style="left:313px;top:148px;color:#1e1e1e">Локальный диск (C:)</div>
<div class="a" style="left:313px;top:164px;width:188px;height:12px;border:1px solid #c4c4c4;border-radius:6px;background:linear-gradient(#f2f2f2,#e4e4e4)"></div>
<div class="a" style="left:314px;top:165px;width:10px;height:10px;border-radius:5px;background:radial-gradient(#b8d8ee,#7fb6dc)"></div>
<div class="t" style="left:313px;top:179px;color:#6d6d6d;letter-spacing:-0.35px">420 ГБ свободно из 444 ГБ</div>

<svg class="a" style="left:262px;top:215px" width="44" height="24" viewBox="0 0 44 24"><path d="M1 9 L24 1.5 L43 7 L19 14.5 Z" fill="#ececec"/><path d="M19 14.5 L43 7 L43 14.5 L19 22.5 Z" fill="#c9c9c9"/><path d="M1 9 L19 14.5 L19 22.5 L1 16.5 Z" fill="#9a9a9a"/><path d="M2.5 10.5 L17.5 15.2 L17.5 20.5 L2.5 15.5 Z" fill="#262626"/><path d="M13 16.5 L16 17.5 L16 18.5 L13 17.5Z" fill="#7fcf7f"/></svg>
<div class="t" style="left:313px;top:204px;color:#1e1e1e;letter-spacing:-0.45px">Transcend (E:)</div>
<div class="a" style="left:313px;top:220px;width:188px;height:12px;border:1px solid #d0a8a4;border-radius:6px;background:linear-gradient(#f6c4bb,#e8887c 60%,#f0a094)"></div>
<div class="t" style="left:313px;top:235px;color:#6d6d6d;letter-spacing:-0.35px">876 МБ свободно из 57,6 ГБ</div>

<svg class="a" style="left:261px;top:259px" width="46" height="46" viewBox="0 0 46 46"><path d="M3 2 L40 2 L42 42 L5 45 Z" fill="#e9eef2"/><path d="M3 2 L5 45 L3 44 L1 3Z" fill="#9fb2c2"/><rect x="6" y="4" width="8" height="2" fill="#a9c4d8"/><rect x="31" y="5" width="6" height="2" fill="#b8cbd9"/><path d="M9 14 L21 12 L21 23 L9 24Z M23 11.5 L38 9.5 L38 23 L23 23Z M9 26 L21 26 L21 37 L9 36Z M23 26 L38 26 L38 39 L23 37Z" fill="#2178d4"/></svg>
<div class="t" style="left:313px;top:260px;color:#1e1e1e;letter-spacing:-0.22px">DVD-дисковод (G:)</div>
<div class="t" style="left:313px;top:275px;color:#1e1e1e;letter-spacing:-1px">WIN10_ENT_X64_LTSC_OVG</div>
<div class="t" style="left:313px;top:291px;color:#6d6d6d;letter-spacing:-0.28px">0 байт свободно из 5,71 ГБ</div>

<svg class="a" style="left:516px;top:169px" width="44" height="24" viewBox="0 0 44 24"><path d="M1 9 L24 1.5 L43 7 L19 14.5 Z" fill="#ececec"/><path d="M19 14.5 L43 7 L43 14.5 L19 22.5 Z" fill="#c9c9c9"/><path d="M1 9 L19 14.5 L19 22.5 L1 16.5 Z" fill="#9a9a9a"/><path d="M2.5 10.5 L17.5 15.2 L17.5 20.5 L2.5 15.5 Z" fill="#262626"/><path d="M13 16.5 L16 17.5 L16 18.5 L13 17.5Z" fill="#7fcf7f"/></svg>
<div class="t" style="left:567px;top:148px;color:#1e1e1e">Локальный диск (D:)</div>
<div class="a" style="left:567px;top:164px;width:189px;height:12px;border:1px solid #c4c4c4;border-radius:6px;background:linear-gradient(#f2f2f2,#e4e4e4)"></div>
<div class="a" style="left:568px;top:165px;width:16px;height:10px;border-radius:5px;background:radial-gradient(#c5e6f0,#8cc6da)"></div>
<div class="t" style="left:567px;top:179px;color:#6d6d6d;letter-spacing:-0.35px">1,64 ТБ свободно из 1,81 ТБ</div>

<svg class="a" style="left:516px;top:206px" width="46" height="40" viewBox="0 0 46 40"><g transform="translate(0,16)"><path d="M1 9 L24 1.5 L43 7 L19 14.5 Z" fill="#ececec"/><path d="M19 14.5 L43 7 L43 14.5 L19 22.5 Z" fill="#c9c9c9"/><path d="M1 9 L19 14.5 L19 22.5 L1 16.5 Z" fill="#9a9a9a"/><path d="M2.5 10.5 L17.5 15.2 L17.5 20.5 L2.5 15.5 Z" fill="#262626"/><path d="M13 16.5 L16 17.5 L16 18.5 L13 17.5Z" fill="#7fcf7f"/></g><circle cx="30" cy="14" r="13" fill="#e6e6e6" stroke="#c8c8c8"/><circle cx="30" cy="14" r="3" fill="#fff" stroke="#bbb"/><rect x="17" y="16" width="28" height="13" rx="2" fill="#1c1c1c"/><text x="31" y="26.5" text-anchor="middle" font-family="Liberation Sans" font-size="10" fill="#fff">DVD</text></svg>
<div class="t" style="left:567px;top:220px;color:#1e1e1e;letter-spacing:-0.38px">DVD RW дисковод (F:)</div>

<!-- details pane -->
<div class="a" style="left:82px;top:320px;width:687px;height:60px;background:#f0f0f0;border-top:1px solid #d9d9d9"></div>
<svg class="a" style="left:93px;top:334px" width="45" height="42" viewBox="0 0 45 42"><path d="M11 2 L43 11 L43 31 L11 19Z" fill="#2a86c8"/><path d="M12.5 4 L41.5 12.5 L41.5 29 L12.5 17.5Z" fill="#4fb8f0"/><path d="M24 24 L30 26 L30 31 L24 29Z" fill="#c9d1d8"/><path d="M1 35 L20 29 L35 34 L16 41Z" fill="#e3e7ea" stroke="#b9c0c6" stroke-width="0.6"/><path d="M5 35 L20 30.5 L31 34 L16 39Z" fill="none" stroke="#c8ced3" stroke-width="0.7" stroke-dasharray="1 1"/></svg>
<div class="t" style="left:149px;top:334px;color:#1e1e1e;letter-spacing:-0.25px">DESKTOP-4P8TSRA</div>
<div class="t" style="left:263px;top:334px;color:#6d6d6d">Рабочая группа:</div>
<div class="t" style="left:364px;top:334px;color:#1e1e1e;letter-spacing:-1px">WORKGROUP</div>
<div class="t" style="left:490px;top:334px;color:#6d6d6d">Память:</div>
<div class="t" style="left:546px;top:334px;color:#1e1e1e;letter-spacing:-0.3px">32,0 ГБ</div>
<div class="t" style="left:288px;top:352px;color:#6d6d6d">Процессор:</div>
<div class="t" style="left:364px;top:352px;color:#1e1e1e;letter-spacing:-0.3px">13th Gen Intel(R) Core...</div>
<!-- status bar -->
<div class="a" style="left:82px;top:380px;width:687px;height:21px;background:#f1f1f1;border-top:1px solid #d6d6d6"></div>
<div class="a" style="left:178px;top:381px;width:1px;height:20px;background:#dcdcdc"></div>
<div class="t" style="left:96px;top:384px;color:#333">Элементов: 5</div>
<svg class="a" style="left:724px;top:383px" width="40" height="13" viewBox="0 0 40 13"><path d="M1 2h3M1 6h3M1 10h3M6 2h9M6 6h9M6 10h9" stroke="#7d8a96" stroke-width="1.2"/><rect x="24" y="1" width="14" height="11" fill="#fff" stroke="#6c7c8c"/><rect x="26" y="3" width="10" height="7" fill="#9db3c7"/></svg>



<!-- C props -->
<div class="win" id="cprops" style="left:795px;top:13px;width:373px;height:501px"></div>
<div class="cbtn" style="left:1138px;top:20px;opacity:.8"></div>
<svg class="a" style="left:808px;top:22px" width="18" height="14" viewBox="0 0 44 34"><g transform="translate(0,10)"><path d="M1 9 L24 1.5 L43 7 L19 14.5 Z" fill="#ececec"/><path d="M19 14.5 L43 7 L43 14.5 L19 22.5 Z" fill="#c9c9c9"/><path d="M1 9 L19 14.5 L19 22.5 L1 16.5 Z" fill="#9a9a9a"/><path d="M2.5 10.5 L17.5 15.2 L17.5 20.5 L2.5 15.5 Z" fill="#262626"/><path d="M13 16.5 L16 17.5 L16 18.5 L13 17.5Z" fill="#7fcf7f"/></g><rect x="1" y="0" width="7" height="7" fill="#1ca6e3"/><rect x="9" y="-0.5" width="8" height="7.5" fill="#1ca6e3"/><rect x="1" y="8" width="7" height="7" fill="#1ca6e3"/><rect x="9" y="8" width="8" height="7.5" fill="#1ca6e3"/></svg>
<div class="ttl" style="left:830px;top:22px;color:#6b7580">Свойства: Локальный диск (C:)</div>
<div class="a" style="left:800px;top:43px;width:363px;height:466px;background:#f0f0f0;border:1px solid #7f8e9c"></div>
<!-- tabs row1 -->
<div class="a" style="left:809px;top:53px;width:118px;height:19px;border:1px solid #d9d9d9;border-bottom:none;background:linear-gradient(#f6f6f6,#ebebeb)"></div>
<div class="a" style="left:926px;top:53px;width:151px;height:19px;border:1px solid #d9d9d9;border-bottom:none;background:linear-gradient(#f6f6f6,#ebebeb)"></div>
<div class="a" style="left:1076px;top:53px;width:77px;height:19px;border:1px solid #d9d9d9;border-bottom:none;background:linear-gradient(#f6f6f6,#ebebeb)"></div>
<div class="t" style="left:832px;top:57px;font-size:11px">Безопасность</div>
<div class="t" style="left:949px;top:57px;font-size:11px">Предыдущие версии</div>
<div class="t" style="left:1100px;top:57px;font-size:11px">Квота</div>
<!-- panel -->
<div class="a" style="left:806px;top:89px;width:350px;height:386px;border:1px solid #d9d9d9;background:#f7f7f7"></div>
<!-- tabs row2 -->
<div class="a" style="left:886px;top:72px;width:78px;height:18px;border:1px solid #d9d9d9;background:linear-gradient(#f6f6f6,#ebebeb)"></div>
<div class="a" style="left:963px;top:72px;width:115px;height:18px;border:1px solid #d9d9d9;background:linear-gradient(#f6f6f6,#ebebeb)"></div>
<div class="a" style="left:1077px;top:72px;width:77px;height:18px;border:1px solid #d9d9d9;background:linear-gradient(#f6f6f6,#ebebeb)"></div>
<div class="a" style="left:807px;top:70px;width:80px;height:21px;border:1px solid #d9d9d9;border-top:1px solid #6dc3e6;border-bottom:none;background:#f7f7f7"></div>
<div class="t" style="left:829px;top:74px;font-size:11px">Общие</div>
<div class="t" style="left:904px;top:76px;font-size:11px">Сервис</div>
<div class="t" style="left:982px;top:76px;font-size:11px">Оборудование</div>
<div class="t" style="left:1097px;top:76px;font-size:11px">Доступ</div>
<svg class="a" style="left:824px;top:110px" width="24" height="23" viewBox="0 0 44 42"><g transform="translate(0,18)"><path d="M1 9 L24 1.5 L43 7 L19 14.5 Z" fill="#ececec"/><path d="M19 14.5 L43 7 L43 14.5 L19 22.5 Z" fill="#c9c9c9"/><path d="M1 9 L19 14.5 L19 22.5 L1 16.5 Z" fill="#9a9a9a"/><path d="M2.5 10.5 L17.5 15.2 L17.5 20.5 L2.5 15.5 Z" fill="#262626"/><path d="M13 16.5 L16 17.5 L16 18.5 L13 17.5Z" fill="#7fcf7f"/></g><rect x="1" y="2" width="8" height="8" fill="#2aa9d8"/><rect x="10" y="1" width="9" height="9" fill="#2aa9d8"/><rect x="1" y="11" width="8" height="8" fill="#2aa9d8"/><rect x="10" y="11" width="9" height="9" fill="#2aa9d8"/></svg>
<div class="a" style="left:896px;top:110px;width:244px;height:21px;border:1px solid #c8c8c8;border-top-color:#a8a8a8;background:#fff"></div>
<div class="a" style="left:822px;top:143px;width:318px;height:1px;background:#a0a0a0"></div>
<div class="t" style="left:822px;top:154px;font-size:11px">Тип:</div>
<div class="t" style="left:930px;top:154px;font-size:11px">Локальный диск</div>
<div class="t" style="left:822px;top:175px;font-size:11px">Файловая система:</div>
<div class="t" style="left:930px;top:175px;font-size:11px">NTFS</div>
<div class="a" style="left:822px;top:195px;width:108px;height:1px;background:#a0a0a0"></div>
<div class="a" style="left:822px;top:203px;width:15px;height:15px;background:#26a0da"></div>
<div class="t" style="left:843px;top:204px;font-size:11px">Занято:</div>
<div class="t" style="left:942px;top:204px;font-size:11px">25 219 452 928 байт</div>
<div class="t" style="left:1064px;top:204px;font-size:11px;width:42px;text-align:right">23,4 ГБ</div>
<div class="a" style="left:822px;top:224px;width:15px;height:15px;background:#a6a6a6"></div>
<div class="t" style="left:843px;top:225px;font-size:11px">Свободно:</div>
<div class="t" style="left:936px;top:225px;font-size:11px">452 002 160 640 байт</div>
<div class="t" style="left:1064px;top:225px;font-size:11px;width:42px;text-align:right">420 ГБ</div>
<div class="a" style="left:822px;top:249px;width:318px;height:1px;background:#a0a0a0"></div>
<div class="t" style="left:843px;top:259px;font-size:11px">Емкость:</div>
<div class="t" style="left:936px;top:259px;font-size:11px">477 221 613 568 байт</div>
<div class="t" style="left:1064px;top:259px;font-size:11px;width:42px;text-align:right">444 ГБ</div>
<svg class="a" style="left:950px;top:278px" width="62" height="62" viewBox="0 0 62 62"><circle cx="31" cy="31" r="22.5" fill="none" stroke="#a6a6a6" stroke-width="11"/><path d="M8.5 31 A22.5 22.5 0 0 1 9.73 23.67" fill="none" stroke="#26a0da" stroke-width="11"/><circle cx="31" cy="31" r="17" fill="#fff"/></svg>
<div class="t" style="left:960px;top:352px;font-size:11px">Диск C:</div>
<div class="a" style="left:1052px;top:343px;width:88px;height:20px;border:1px solid #adadad;background:linear-gradient(#f2f2f2,#e4e4e4)"></div>
<div class="t" style="left:1059px;top:347px;font-size:11px">Очистка диска</div>
<div class="a" style="left:822px;top:369px;width:318px;height:1px;background:#a0a0a0"></div>
<div class="a" style="left:822px;top:402px;width:13px;height:13px;border:1px solid #9a9a9a;background:linear-gradient(#eee,#fff)"></div>
<div class="t" style="left:838px;top:403px;font-size:11px">Сжать этот диск для экономии места</div>
<div class="a" style="left:822px;top:425px;width:13px;height:13px;border:1px solid #9a9a9a;background:linear-gradient(#eee,#fff)"></div>
<div class="t" style="left:838px;top:425px;font-size:11px">Разрешить индексировать содержимое файлов на этом</div>
<div class="t" style="left:838px;top:438px;font-size:11px">диске в дополнение к свойствам файла</div>
<div class="a" style="left:920px;top:483px;width:73px;height:20px;border:1px solid #adadad;background:linear-gradient(#f2f2f2,#e4e4e4)"></div>
<div class="t" style="left:947px;top:487px;font-size:11px">OK</div>
<div class="a" style="left:1001px;top:483px;width:73px;height:20px;border:1px solid #adadad;background:linear-gradient(#f2f2f2,#e4e4e4)"></div>
<div class="t" style="left:1017px;top:487px;font-size:11px">Отмена</div>
<div class="a" style="left:1082px;top:483px;width:73px;height:20px;border:1px solid #d0d0d0;background:#f4f4f4"></div>
<div class="t" style="left:1090px;top:487px;font-size:11px;color:#a0a0a0">Применить</div>



<!-- DVD props -->
<div class="win" id="gprops" style="left:1187px;top:10px;width:372px;height:485px"></div>
<div class="cbtn" style="left:1530px;top:18px;opacity:.8"></div>
<svg class="a" style="left:1202px;top:21px" width="14" height="13" viewBox="0 0 14 13"><rect x="0" y="0" width="1.5" height="13" fill="#7a8fa3"/><rect x="3" y="2" width="4.5" height="4" fill="#1f7fd8"/><rect x="8.5" y="1.5" width="5" height="4.5" fill="#1f7fd8"/><rect x="3" y="7" width="4.5" height="4" fill="#1f7fd8"/><rect x="8.5" y="7" width="5" height="4.5" fill="#1f7fd8"/></svg>
<div class="ttl" style="left:1223px;top:20px;color:#6b7580;letter-spacing:-0.55px">Свойства: DVD-дисковод (G:) WIN10_ENT_X64_LTSC_O...</div>
<div class="a" style="left:1193px;top:40px;width:362px;height:451px;background:#f0f0f0;border:1px solid #7f8e9c"></div>
<div class="a" style="left:1199px;top:68px;width:349px;height:386px;border:1px solid #d9d9d9;background:#f7f7f7"></div>
<div class="a" style="left:1249px;top:50px;width:86px;height:19px;border:1px solid #d9d9d9;background:linear-gradient(#f6f6f6,#ebebeb)"></div>
<div class="a" style="left:1334px;top:50px;width:50px;height:19px;border:1px solid #d9d9d9;background:linear-gradient(#f6f6f6,#ebebeb)"></div>
<div class="a" style="left:1383px;top:50px;width:67px;height:19px;border:1px solid #d9d9d9;background:linear-gradient(#f6f6f6,#ebebeb)"></div>
<div class="a" style="left:1200px;top:48px;width:50px;height:21px;border:1px solid #d9d9d9;border-top:1px solid #6dc3e6;border-bottom:none;background:#f7f7f7"></div>
<div class="t" style="left:1206px;top:52px;font-size:11px">Общие</div>
<div class="t" style="left:1253px;top:54px;font-size:11px">Оборудование</div>
<div class="t" style="left:1341px;top:54px;font-size:11px">Доступ</div>
<div class="t" style="left:1388px;top:54px;font-size:11px">Настройка</div>
<div class="a" style="left:1288px;top:89px;width:243px;height:21px;border:1px solid #c8c8c8;border-top-color:#a8a8a8;background:#fff"></div>
<div class="t" style="left:1292px;top:93px;font-size:11px;letter-spacing:-0.55px">WIN10_ENT_X64_LTSC_OVG</div>
<div class="a" style="left:1214px;top:122px;width:317px;height:1px;background:#a0a0a0"></div>
<div class="t" style="left:1214px;top:133px;font-size:11px">Тип:</div>
<div class="t" style="left:1321px;top:133px;font-size:11px">CD-дисковод</div>
<div class="t" style="left:1214px;top:154px;font-size:11px">Файловая система:</div>
<div class="t" style="left:1321px;top:154px;font-size:11px">UDF</div>
<div class="a" style="left:1214px;top:174px;width:107px;height:1px;background:#a0a0a0"></div>
<div class="a" style="left:1214px;top:182px;width:15px;height:15px;background:#26a0da"></div>
<div class="t" style="left:1235px;top:183px;font-size:11px">Занято:</div>
<div class="t" style="left:1337px;top:183px;font-size:11px;width:97px;text-align:right">6 133 612 544 байт</div>
<div class="t" style="left:1447px;top:183px;font-size:11px;width:50px;text-align:right">5,71 ГБ</div>
<div class="a" style="left:1214px;top:203px;width:15px;height:15px;background:#a6a6a6"></div>
<div class="t" style="left:1235px;top:204px;font-size:11px">Свободно:</div>
<div class="t" style="left:1337px;top:204px;font-size:11px;width:97px;text-align:right">0 байт</div>
<div class="t" style="left:1447px;top:204px;font-size:11px;width:50px;text-align:right">0 байт</div>
<div class="a" style="left:1214px;top:228px;width:317px;height:1px;background:#a0a0a0"></div>
<div class="t" style="left:1235px;top:238px;font-size:11px">Емкость:</div>
<div class="t" style="left:1337px;top:238px;font-size:11px;width:97px;text-align:right">6 133 612 544 байт</div>
<div class="t" style="left:1447px;top:238px;font-size:11px;width:50px;text-align:right">5,71 ГБ</div>
<svg class="a" style="left:1342px;top:257px" width="62" height="62" viewBox="0 0 62 62"><circle cx="31" cy="31" r="22.5" fill="none" stroke="#26a0da" stroke-width="11"/><circle cx="31" cy="31" r="17" fill="#fff"/></svg>
<div class="t" style="left:1353px;top:331px;font-size:11px">Диск G:</div>
<div class="a" style="left:1214px;top:348px;width:317px;height:1px;background:#a0a0a0"></div>
<div class="a" style="left:1312px;top:462px;width:73px;height:20px;border:1px solid #adadad;background:linear-gradient(#f2f2f2,#e4e4e4)"></div>
<div class="t" style="left:1339px;top:466px;font-size:11px">OK</div>
<div class="a" style="left:1393px;top:462px;width:73px;height:20px;border:1px solid #adadad;background:linear-gradient(#f2f2f2,#e4e4e4)"></div>
<div class="t" style="left:1409px;top:466px;font-size:11px">Отмена</div>
<div class="a" style="left:1474px;top:462px;width:73px;height:20px;border:1px solid #d0d0d0;background:#f4f4f4"></div>
<div class="t" style="left:1482px;top:466px;font-size:11px;color:#a0a0a0">Применить</div>



<!-- Task manager -->
<div class="win" id="tm" style="left:79px;top:429px;width:816px;height:593px"></div>
<div class="cbtn" style="left:766px;top:436px"></div>
<div class="cbtn" style="left:812px;top:436px"></div>
<div class="cbtn" style="left:858px;top:436px"></div>
<svg class="a" style="left:91px;top:437px" width="17" height="14" viewBox="0 0 17 14"><rect x="4" y="0.5" width="12" height="9" fill="#eef3f7" stroke="#8aa0b2"/><path d="M5 7 L8 3 L10 6 L12 2 L15 5" fill="none" stroke="#3d8ac4" stroke-width="1"/><rect x="0" y="5" width="3" height="9" fill="#9fb0bd"/><rect x="6" y="10" width="8" height="3" fill="#b8c4ce"/></svg>
<div class="ttl" style="left:113px;top:438px;color:#1e1e1e">Диспетчер задач</div>
<div class="a" style="left:83px;top:458px;width:809px;height:559px;background:#fff;border:1px solid #8e9ba8"></div>
<div class="a" style="left:84px;top:459px;width:807px;height:20px;background:#f0f0f0"></div>
<div class="t" style="left:92px;top:463px">Файл</div>
<div class="t" style="left:134px;top:463px">Параметры</div>
<div class="t" style="left:212px;top:463px">Вид</div>
<div class="a" style="left:86px;top:483px;width:67px;height:21px;border:1px solid #d9d9d9;border-bottom:none;background:linear-gradient(#f5f5f5,#ececec)"></div>
<div class="a" style="left:284px;top:483px;width:130px;height:21px;border:1px solid #d9d9d9;border-bottom:none;background:linear-gradient(#f5f5f5,#ececec)"></div>
<div class="a" style="left:413px;top:483px;width:84px;height:21px;border:1px solid #d9d9d9;border-bottom:none;background:linear-gradient(#f5f5f5,#ececec)"></div>
<div class="a" style="left:496px;top:483px;width:91px;height:21px;border:1px solid #d9d9d9;border-bottom:none;background:linear-gradient(#f5f5f5,#ececec)"></div>
<div class="a" style="left:586px;top:483px;width:88px;height:21px;border:1px solid #d9d9d9;border-bottom:none;background:linear-gradient(#f5f5f5,#ececec)"></div>
<div class="a" style="left:673px;top:483px;width:58px;height:21px;border:1px solid #d9d9d9;border-bottom:none;background:linear-gradient(#f5f5f5,#ececec)"></div>
<div class="a" style="left:152px;top:481px;width:133px;height:24px;border:1px solid #d9d9d9;border-top:1px solid #7cc6e4;border-bottom:none;background:#fff"></div>
<div class="t" style="left:92px;top:488px">Процессы</div>
<div class="t" style="left:161px;top:486px">Производительность</div>
<div class="t" style="left:289px;top:488px">Журнал приложений</div>
<div class="t" style="left:419px;top:488px">Автозагрузка</div>
<div class="t" style="left:503px;top:488px">Пользователи</div>
<div class="t" style="left:593px;top:488px">Подробности</div>
<div class="t" style="left:680px;top:488px">Службы</div>

<!-- left pane -->
<div class="a" style="left:349px;top:530px;width:1px;height:433px;background:#e3e3e3"></div>
<div class="a" style="left:98px;top:526px;width:60px;height:40px;border:1px solid #3f6470"></div>
<svg class="a" style="left:99px;top:555px" width="58" height="10"><path d="M25 10 L26.5 4 L28 10 M33 10 L34 8 L35 10" fill="none" stroke="#3f6470" stroke-width="1"/></svg>
<div class="t" style="left:168px;top:525px;font-size:15px">ЦП</div>
<div class="t" style="left:168px;top:544px;letter-spacing:-0.3px">0% 0,91 ГГц</div>

<div class="a" style="left:89px;top:577px;width:256px;height:58px;border:1px solid #d6d6d6;border-radius:3px;background:linear-gradient(#f4f4f4,#e9e9e9)"></div>
<div class="a" style="left:98px;top:586px;width:60px;height:40px;border:1px solid #6a3384;background:#fff"></div>
<div class="a" style="left:128px;top:623px;width:29px;height:2px;background:#6a3384"></div>
<div class="t" style="left:168px;top:585px;font-size:15px">Память</div>
<div class="t" style="left:168px;top:604px;letter-spacing:-0.37px">1,5/31,7 ГБ (5%)</div>

<div class="a" style="left:98px;top:646px;width:60px;height:46px;border:1px solid #6f8a52"></div>
<div class="t" style="left:168px;top:645px;font-size:15px">Диск 0 (C:)</div>
<div class="t" style="left:168px;top:664px">SSD</div>
<div class="t" style="left:168px;top:679px">0%</div>

<div class="a" style="left:98px;top:712px;width:60px;height:46px;border:1px solid #6f8a52"></div>
<div class="t" style="left:168px;top:711px;font-size:15px">Диск 1 (D:)</div>
<div class="t" style="left:168px;top:730px">HDD</div>
<div class="t" style="left:168px;top:745px">0%</div>

<div class="a" style="left:98px;top:778px;width:60px;height:46px;border:1px solid #6f8a52"></div>
<div class="t" style="left:168px;top:777px;font-size:15px">Диск 2 (E:)</div>
<div class="t" style="left:168px;top:796px">USB</div>
<div class="t" style="left:168px;top:811px">0%</div>

<div class="a" style="left:98px;top:844px;width:60px;height:46px;border:1px solid #76603e"></div>
<div class="t" style="left:168px;top:843px;font-size:15px">Ethernet</div>
<div class="t" style="left:168px;top:862px">Ethernet</div>
<div class="t" style="left:168px;top:877px"><span style="color:#777">О:</span> 0 <span style="color:#777">П:</span> 0 кбит/с</div>

<div class="a" style="left:98px;top:910px;width:60px;height:46px;border:1px solid #44708a"></div>
<svg class="a" style="left:99px;top:945px" width="58" height="10"><path d="M25 10 L27 5 L29 9 L31 4 L33 8 L35 5 L37 10" fill="none" stroke="#44708a" stroke-width="1"/></svg>
<div class="t" style="left:168px;top:909px;font-size:15px;letter-spacing:.2px">Графический процессор</div>
<div class="t" style="left:168px;top:928px;font-size:11px">NVIDIA GeForce GTX 1660 Ti</div>
<div class="t" style="left:168px;top:943px;letter-spacing:-0.3px">1% (34 °C)</div>

<!-- right pane -->
<div class="t" style="left:375px;top:527px;font-size:26px">Память</div>
<div class="t" style="left:765px;top:537px;font-size:15px;width:100px;text-align:right">32,0 ГБ</div>
<div class="t" style="left:375px;top:563px;font-size:11.5px;color:#6d6d6d">Использование памяти</div>
<div class="t" style="left:765px;top:563px;font-size:11px;color:#6d6d6d;width:100px;text-align:right">31,7 ГБ</div>
<div class="a" style="left:376px;top:578px;width:490px;height:110px;border:1px solid #74488a;background:#fff"></div><div class="a" style="left:394px;top:579px;width:1px;height:108px;background:#dedbe0"></div><div class="a" style="left:427px;top:579px;width:1px;height:108px;background:#dedbe0"></div><div class="a" style="left:460px;top:579px;width:1px;height:108px;background:#dedbe0"></div><div class="a" style="left:493px;top:579px;width:1px;height:108px;background:#dedbe0"></div><div class="a" style="left:526px;top:579px;width:1px;height:108px;background:#dedbe0"></div><div class="a" style="left:559px;top:579px;width:1px;height:108px;background:#dedbe0"></div><div class="a" style="left:592px;top:579px;width:1px;height:108px;background:#dedbe0"></div><div class="a" style="left:625px;top:579px;width:1px;height:108px;background:#dedbe0"></div><div class="a" style="left:658px;top:579px;width:1px;height:108px;background:#dedbe0"></div><div class="a" style="left:692px;top:579px;width:1px;height:108px;background:#dedbe0"></div><div class="a" style="left:725px;top:579px;width:1px;height:108px;background:#dedbe0"></div><div class="a" style="left:758px;top:579px;width:1px;height:108px;background:#dedbe0"></div><div class="a" style="left:791px;top:579px;width:1px;height:108px;background:#dedbe0"></div><div class="a" style="left:824px;top:579px;width:1px;height:108px;background:#dedbe0"></div><div class="a" style="left:857px;top:579px;width:1px;height:108px;background:#dedbe0"></div><div class="a" style="left:377px;top:589px;width:488px;height:1px;background:#dedbe0"></div><div class="a" style="left:377px;top:600px;width:488px;height:1px;background:#dedbe0"></div><div class="a" style="left:377px;top:611px;width:488px;height:1px;background:#dedbe0"></div><div class="a" style="left:377px;top:622px;width:488px;height:1px;background:#dedbe0"></div><div class="a" style="left:377px;top:633px;width:488px;height:1px;background:#dedbe0"></div><div class="a" style="left:377px;top:644px;width:488px;height:1px;background:#dedbe0"></div><div class="a" style="left:377px;top:655px;width:488px;height:1px;background:#dedbe0"></div><div class="a" style="left:377px;top:667px;width:488px;height:1px;background:#dedbe0"></div><div class="a" style="left:377px;top:678px;width:488px;height:1px;background:#dedbe0"></div><svg class="a" style="left:377px;top:579px" width="488" height="108"><path d="M232 108 L239 103.5 L488 103.5 L488 108 Z" fill="#f7e4f8"/><path d="M232 108 L239 103.5 L488 103.5" fill="none" stroke="#5e3a70" stroke-width="1.3"/></svg>
<div class="t" style="left:376px;top:691px;font-size:11px;color:#6d6d6d">60 секунд</div>
<div class="t" style="left:765px;top:691px;font-size:11px;color:#6d6d6d;width:100px;text-align:right">0</div>
<div class="t" style="left:376px;top:710px;font-size:11px;color:#6d6d6d">Структура памяти</div>
<div class="a" style="left:376px;top:727px;width:490px;height:52px;border:1px solid #74488a;background:#fff"></div>
<div class="a" style="left:377px;top:728px;width:23px;height:50px;background:#f0eef0"></div>
<div class="a" style="left:400px;top:728px;width:1px;height:50px;background:#a08aa8"></div>
<div class="a" style="left:409px;top:728px;width:1px;height:50px;background:#c8b8cc"></div>

<div class="t" style="left:376px;top:805px;font-size:11.5px;color:#6d6d6d">Используется (сжатая)</div>
<div class="t" style="left:376px;top:824px;font-size:18px">1,5 ГБ (0,3 МБ)</div>
<div class="t" style="left:524px;top:805px;font-size:11.5px;color:#6d6d6d">Доступно</div>
<div class="t" style="left:524px;top:824px;font-size:18px">30,2 ГБ</div>
<div class="t" style="left:376px;top:856px;font-size:11.5px;color:#6d6d6d">Выделено</div>
<div class="t" style="left:376px;top:876px;font-size:18px">1,9/36,7 ГБ</div>
<div class="t" style="left:492px;top:856px;font-size:11.5px;color:#6d6d6d">Кэшировано</div>
<div class="t" style="left:492px;top:876px;font-size:18px">633 МБ</div>
<div class="t" style="left:376px;top:907px;font-size:11.5px;color:#6d6d6d">Выгружаемый пул</div>
<div class="t" style="left:376px;top:926px;font-size:18px">86,3 МБ</div>
<div class="t" style="left:499px;top:907px;font-size:11.5px;color:#6d6d6d">Невыгружаемый пул</div>
<div class="t" style="left:499px;top:926px;font-size:18px">155 МБ</div>

<div class="t" style="left:628px;top:805px;font-size:11.8px;color:#6d6d6d">Скорость:</div>
<div class="t" style="left:628px;top:823px;font-size:11.8px;color:#6d6d6d">Использовано гнезд:</div>
<div class="t" style="left:628px;top:841px;font-size:11.8px;color:#6d6d6d">Форм-фактор:</div>
<div class="t" style="left:628px;top:859px;font-size:11.8px;color:#6d6d6d">Зарезервировано аппаратно:</div>
<div class="t" style="left:803px;top:805px;font-size:11.5px">6000 МГц</div>
<div class="t" style="left:803px;top:823px;font-size:11.5px">2 из 2</div>
<div class="t" style="left:803px;top:841px;font-size:11.5px">DIMM</div>
<div class="t" style="left:803px;top:859px;font-size:11.5px">290 МБ</div>

<!-- bottom -->
<svg class="a" style="left:93px;top:983px" width="17" height="17" viewBox="0 0 17 17"><circle cx="8.5" cy="8.5" r="7.5" fill="#fff" stroke="#a9a9a9"/><path d="M5 10 L8.5 6.5 L12 10" fill="none" stroke="#555" stroke-width="1.3"/></svg>
<div class="t" style="left:118px;top:985px">Меньше</div>
<div class="a" style="left:174px;top:982px;width:1px;height:18px;background:#d9d9d9"></div>
<svg class="a" style="left:181px;top:982px" width="17" height="17" viewBox="0 0 17 17"><circle cx="8.5" cy="8.5" r="7.5" fill="#f3e8e8" stroke="#8e7d7d"/><circle cx="8.5" cy="8.5" r="5.5" fill="#fff" stroke="#c9b9b9" stroke-width="0.6"/><path d="M5.5 4.5 L10.5 12" stroke="#c0282d" stroke-width="1.6"/></svg>
<div class="t" style="left:203px;top:985px;color:#1d64a8">Открыть монитор ресурсов</div>



<!-- Resource monitor -->
<div class="win" id="rm" style="left:962px;top:539px;width:874px;height:475px"></div>
<div class="cbtn" style="left:1707px;top:546px;opacity:.8"></div>
<div class="cbtn" style="left:1753px;top:546px;opacity:.8"></div>
<div class="cbtn" style="left:1799px;top:546px;opacity:.8"></div>
<svg class="a" style="left:976px;top:547px" width="16" height="16" viewBox="0 0 16 16"><circle cx="8" cy="8" r="7.3" fill="#efe6e6" stroke="#8a7a7a" stroke-width="1"/><circle cx="8" cy="8" r="5.3" fill="#fff" stroke="#cbbcbc" stroke-width="0.5"/><path d="M5 3.5 L9.5 10.5" stroke="#5a1a1a" stroke-width="2"/></svg>
<div class="ttl" style="left:997px;top:549px;color:#6b7580">Монитор ресурсов</div>
<div class="a" style="left:968px;top:569px;width:863px;height:441px;background:#f0f0f0;border:1px solid #8e9ba8"></div>
<div class="t" style="left:975px;top:574px;color:#6d6d6d">Файл</div>
<div class="t" style="left:1018px;top:574px;color:#6d6d6d">Монитор</div>
<div class="t" style="left:1083px;top:574px;color:#6d6d6d">Справка</div>
<div class="a" style="left:969px;top:614px;width:861px;height:6px;border-top:1px solid #d9d9d9;border-bottom:1px solid #d9d9d9;background:#f7f7f7"></div>
<div class="a" style="left:971px;top:595px;width:48px;height:20px;border:1px solid #d9d9d9;border-bottom:none;background:linear-gradient(#f6f6f6,#ececec)"></div>
<div class="a" style="left:1018px;top:595px;width:48px;height:20px;border:1px solid #d9d9d9;border-bottom:none;background:linear-gradient(#f6f6f6,#ececec)"></div>
<div class="a" style="left:1121px;top:595px;width:47px;height:20px;border:1px solid #d9d9d9;border-bottom:none;background:linear-gradient(#f6f6f6,#ececec)"></div>
<div class="a" style="left:1167px;top:595px;width:49px;height:20px;border:1px solid #d9d9d9;border-bottom:none;background:linear-gradient(#f6f6f6,#ececec)"></div>
<div class="a" style="left:1065px;top:592px;width:57px;height:23px;border:1px solid #d9d9d9;border-top:1px solid #7cc6e4;border-bottom:none;background:#f7f7f7"></div>
<div class="t" style="left:977px;top:599px">Обзор</div>
<div class="t" style="left:1025px;top:599px">ЦП</div>
<div class="t" style="left:1073px;top:597px">Память</div>
<div class="t" style="left:1126px;top:599px">Диск</div>
<div class="t" style="left:1174px;top:599px">Сеть</div>

<!-- processes section -->
<div class="a" style="left:969px;top:622px;width:620px;height:192px;border:1px solid #8c8c8c;background:#fff"></div>
<div class="a" style="left:970px;top:623px;width:618px;height:29px;background:linear-gradient(#fbfbfb 0,#e6e6e6 45%,#c6c6c6 100%);border-bottom:1px solid #9a9a9a"></div>
<div class="t" style="left:976px;top:630px;font-size:13px">Процессы</div>
<div class="a" style="left:1144px;top:630px;width:11px;height:12px;background:#1f7a1f;border:1px solid #5fb85f"></div>
<div class="t" style="left:1161px;top:631px;letter-spacing:-0.22px">Использование физической памяти: 4%</div>
<svg class="a" style="left:1558px;top:626px" width="21" height="21" viewBox="0 0 21 21"><circle cx="10.5" cy="10.5" r="9.5" fill="linear-gradient(#fff,#ddd)" stroke="#7a7a7a"/><circle cx="10.5" cy="10.5" r="9" fill="#f4f4f4" stroke="#8a8a8a"/><path d="M6.5 12.5 L10.5 8.5 L14.5 12.5" fill="none" stroke="#1a1a1a" stroke-width="2"/></svg>
<div class="a" style="left:970px;top:652px;width:602px;height:22px;background:linear-gradient(#ffffff,#f1f1f1);border-bottom:1px solid #dcdcdc"></div>
<div class="a" style="left:974px;top:657px;width:12px;height:12px;border:1px solid #a8a8a8;background:linear-gradient(#e8e8e8,#fafafa)"></div>
<div class="t" style="left:993px;top:658px">Образ</div>
<div class="t" style="left:1156px;top:658px;letter-spacing:-0.3px">ИД п...</div>
<div class="t" style="left:1207px;top:658px;letter-spacing:-0.3px">Ошибок с...</div>
<div class="t" style="left:1281px;top:658px;letter-spacing:-0.3px">Завершен...</div>
<div class="t" style="left:1358px;top:658px;letter-spacing:-0.3px">Рабочий ...</div>
<div class="t" style="left:1431px;top:658px;letter-spacing:-0.3px">Общий (КБ)</div>
<div class="t" style="left:1505px;top:658px;letter-spacing:-0.3px">Частный (...</div>
<svg class="a" style="left:1529px;top:651px" width="9" height="5"><path d="M0.5 0.5 L4.5 4.5 L8.5 0.5" fill="none" stroke="#9ab" stroke-width="0.8"/></svg>
<div class="a" style="left:1149px;top:652px;width:1px;height:161px;background:#ececec"></div>
<div class="a" style="left:1199px;top:652px;width:1px;height:161px;background:#ececec"></div>
<div class="a" style="left:1274px;top:652px;width:1px;height:161px;background:#ececec"></div>
<div class="a" style="left:1348px;top:652px;width:1px;height:161px;background:#ececec"></div>
<div class="a" style="left:1422px;top:652px;width:1px;height:161px;background:#ececec"></div>
<div class="a" style="left:1496px;top:652px;width:1px;height:161px;background:#ececec"></div>
<div class="a" style="left:974px;top:679px;width:12px;height:12px;border:1px solid #a8a8a8;background:linear-gradient(#e8e8e8,#fafafa)"></div><div class="t" style="left:992px;top:679px;letter-spacing:-0.5px">explorer.exe</div><div class="t" style="left:1156px;top:679px;letter-spacing:-0.4px">4440</div><div class="t" style="left:1187px;top:679px;width:80px;text-align:right;letter-spacing:-0.4px">0</div><div class="t" style="left:1261px;top:679px;width:80px;text-align:right;letter-spacing:-0.4px">122 852</div><div class="t" style="left:1335px;top:679px;width:80px;text-align:right;letter-spacing:-0.4px">147 872</div><div class="t" style="left:1409px;top:679px;width:80px;text-align:right;letter-spacing:-0.4px">98 376</div><div class="t" style="left:1483px;top:679px;width:80px;text-align:right;letter-spacing:-0.4px">49 496</div><div class="a" style="left:974px;top:696px;width:12px;height:12px;border:1px solid #a8a8a8;background:linear-gradient(#e8e8e8,#fafafa)"></div><div class="t" style="left:992px;top:696px;letter-spacing:-0.5px">dwm.exe</div><div class="t" style="left:1156px;top:696px;letter-spacing:-0.4px">1348</div><div class="t" style="left:1187px;top:696px;width:80px;text-align:right;letter-spacing:-0.4px">0</div><div class="t" style="left:1261px;top:696px;width:80px;text-align:right;letter-spacing:-0.4px">63 224</div><div class="t" style="left:1335px;top:696px;width:80px;text-align:right;letter-spacing:-0.4px">66 084</div><div class="t" style="left:1409px;top:696px;width:80px;text-align:right;letter-spacing:-0.4px">43 868</div><div class="t" style="left:1483px;top:696px;width:80px;text-align:right;letter-spacing:-0.4px">22 216</div><div class="a" style="left:974px;top:713px;width:12px;height:12px;border:1px solid #a8a8a8;background:linear-gradient(#e8e8e8,#fafafa)"></div><div class="t" style="left:992px;top:713px;letter-spacing:-0.5px">sidebar.exe</div><div class="t" style="left:1156px;top:713px;letter-spacing:-0.4px">4464</div><div class="t" style="left:1187px;top:713px;width:80px;text-align:right;letter-spacing:-0.4px">0</div><div class="t" style="left:1261px;top:713px;width:80px;text-align:right;letter-spacing:-0.4px">45 284</div><div class="t" style="left:1335px;top:713px;width:80px;text-align:right;letter-spacing:-0.4px">55 936</div><div class="t" style="left:1409px;top:713px;width:80px;text-align:right;letter-spacing:-0.4px">35 508</div><div class="t" style="left:1483px;top:713px;width:80px;text-align:right;letter-spacing:-0.4px">20 428</div><div class="a" style="left:974px;top:730px;width:12px;height:12px;border:1px solid #a8a8a8;background:linear-gradient(#e8e8e8,#fafafa)"></div><div class="t" style="left:992px;top:730px;letter-spacing:-0.5px">perfmon.exe</div><div class="t" style="left:1156px;top:730px;letter-spacing:-0.4px">4916</div><div class="t" style="left:1187px;top:730px;width:80px;text-align:right;letter-spacing:-0.4px">0</div><div class="t" style="left:1261px;top:730px;width:80px;text-align:right;letter-spacing:-0.4px">18 556</div><div class="t" style="left:1335px;top:730px;width:80px;text-align:right;letter-spacing:-0.4px">34 540</div><div class="t" style="left:1409px;top:730px;width:80px;text-align:right;letter-spacing:-0.4px">17 616</div><div class="t" style="left:1483px;top:730px;width:80px;text-align:right;letter-spacing:-0.4px">16 924</div><div class="a" style="left:974px;top:747px;width:12px;height:12px;border:1px solid #a8a8a8;background:linear-gradient(#e8e8e8,#fafafa)"></div><div class="t" style="left:992px;top:747px;letter-spacing:-0.5px">Taskmgr.exe</div><div class="t" style="left:1156px;top:747px;letter-spacing:-0.4px">5192</div><div class="t" style="left:1187px;top:747px;width:80px;text-align:right;letter-spacing:-0.4px">0</div><div class="t" style="left:1261px;top:747px;width:80px;text-align:right;letter-spacing:-0.4px">17 860</div><div class="t" style="left:1335px;top:747px;width:80px;text-align:right;letter-spacing:-0.4px">41 396</div><div class="t" style="left:1409px;top:747px;width:80px;text-align:right;letter-spacing:-0.4px">27 524</div><div class="t" style="left:1483px;top:747px;width:80px;text-align:right;letter-spacing:-0.4px">13 872</div><div class="a" style="left:974px;top:764px;width:12px;height:12px;border:1px solid #a8a8a8;background:linear-gradient(#e8e8e8,#fafafa)"></div><div class="t" style="left:992px;top:764px;letter-spacing:-0.5px">SearchApp.exe</div><div class="t" style="left:1156px;top:764px;letter-spacing:-0.4px">3256</div><div class="t" style="left:1187px;top:764px;width:80px;text-align:right;letter-spacing:-0.4px">0</div><div class="t" style="left:1261px;top:764px;width:80px;text-align:right;letter-spacing:-0.4px">51 432</div><div class="t" style="left:1335px;top:764px;width:80px;text-align:right;letter-spacing:-0.4px">45 892</div><div class="t" style="left:1409px;top:764px;width:80px;text-align:right;letter-spacing:-0.4px">33 052</div><div class="t" style="left:1483px;top:764px;width:80px;text-align:right;letter-spacing:-0.4px">12 840</div><div class="a" style="left:974px;top:781px;width:12px;height:12px;border:1px solid #a8a8a8;background:linear-gradient(#e8e8e8,#fafafa)"></div><div class="t" style="left:992px;top:781px;letter-spacing:-0.5px">svchost.exe (LocalServiceNet...</div><div class="t" style="left:1156px;top:781px;letter-spacing:-0.4px">1260</div><div class="t" style="left:1187px;top:781px;width:80px;text-align:right;letter-spacing:-0.4px">0</div><div class="t" style="left:1261px;top:781px;width:80px;text-align:right;letter-spacing:-0.4px">15 648</div><div class="t" style="left:1335px;top:781px;width:80px;text-align:right;letter-spacing:-0.4px">19 344</div><div class="t" style="left:1409px;top:781px;width:80px;text-align:right;letter-spacing:-0.4px">6 960</div><div class="t" style="left:1483px;top:781px;width:80px;text-align:right;letter-spacing:-0.4px">12 384</div><div class="a" style="left:974px;top:798px;width:12px;height:12px;border:1px solid #a8a8a8;background:linear-gradient(#e8e8e8,#fafafa)"></div><div class="t" style="left:992px;top:798px;letter-spacing:-0.5px">TextInputHost.exe</div><div class="t" style="left:1156px;top:798px;letter-spacing:-0.4px">6040</div><div class="t" style="left:1187px;top:798px;width:80px;text-align:right;letter-spacing:-0.4px">0</div><div class="t" style="left:1261px;top:798px;width:80px;text-align:right;letter-spacing:-0.4px">45 592</div><div class="t" style="left:1335px;top:798px;width:80px;text-align:right;letter-spacing:-0.4px">54 324</div><div class="t" style="left:1409px;top:798px;width:80px;text-align:right;letter-spacing:-0.4px">42 852</div><div class="t" style="left:1483px;top:798px;width:80px;text-align:right;letter-spacing:-0.4px">11 472</div>
<div class="a" style="left:1572px;top:654px;width:14px;height:159px;background:#f5f5f5;border-left:1px solid #e6e6e6"></div>
<div class="a" style="left:1573px;top:654px;width:13px;height:14px;border:1px solid #d6d6d6;background:#fff"></div>
<svg class="a" style="left:1576px;top:659px" width="7" height="4"><path d="M0 4 L7 4 L3.5 0Z" fill="#777"/></svg>
<div class="a" style="left:1573px;top:670px;width:13px;height:16px;border:1px solid #d6d6d6;background:linear-gradient(90deg,#f2f2f2,#e9e9e9)"></div>
<div class="a" style="left:1576px;top:676px;width:7px;height:4px;border-top:1px solid #999;border-bottom:1px solid #999"></div>
<div class="a" style="left:1573px;top:798px;width:13px;height:14px;border:1px solid #d6d6d6;background:#fff"></div>
<svg class="a" style="left:1576px;top:803px" width="7" height="4"><path d="M0 0 L7 0 L3.5 4Z" fill="#777"/></svg>

<!-- physical memory section -->
<div class="a" style="left:969px;top:820px;width:620px;height:185px;border:1px solid #8c8c8c;background:#fff"></div>
<div class="a" style="left:970px;top:821px;width:618px;height:29px;background:linear-gradient(#fbfbfb 0,#e6e6e6 45%,#c6c6c6 100%);border-bottom:1px solid #9a9a9a"></div>
<div class="t" style="left:976px;top:828px;font-size:13px">Физическая память</div>
<div class="a" style="left:1144px;top:828px;width:11px;height:12px;background:#1f7a1f;border:1px solid #5fb85f"></div>
<div class="t" style="left:1161px;top:829px;letter-spacing:-0.5px">Используется: 1523 МБ</div>
<div class="a" style="left:1354px;top:828px;width:11px;height:12px;background:#a9c8f0;border:1px solid #5a9ae0"></div>
<div class="t" style="left:1371px;top:829px;letter-spacing:-0.5px">Доступно: 30917 МБ</div>
<svg class="a" style="left:1558px;top:824px" width="21" height="21" viewBox="0 0 21 21"><circle cx="10.5" cy="10.5" r="9" fill="#f4f4f4" stroke="#8a8a8a"/><path d="M6.5 12.5 L10.5 8.5 L14.5 12.5" fill="none" stroke="#1a1a1a" stroke-width="2"/></svg>
<div class="a" style="left:978px;top:866px;width:602px;height:24px;border:1px solid #8aa0b8;background:#a9c5eb"></div>
<div class="a" style="left:979px;top:867px;width:5px;height:22px;background:#c0c0c0"></div>
<div class="a" style="left:984px;top:867px;width:27px;height:22px;background:#8fb020"></div>
<div class="a" style="left:1011px;top:867px;width:12px;height:22px;background:#3a7ed0"></div>
<div class="a" style="left:1010px;top:898px;width:14px;height:14px;background:#c8c8c8;border:1px solid #9a9a9a"></div>
<div class="a" style="left:1027px;top:899px;width:84px;height:14px;overflow:hidden"><div class="t" style="left:0;top:0">Зарезервирова</div></div>
<div class="t" style="left:1027px;top:912px">аппаратно</div>
<div class="t" style="left:1027px;top:925px;letter-spacing:-0.3px">290 мегабайт</div>
<div class="a" style="left:1118px;top:898px;width:14px;height:14px;background:#8fb020;border:1px solid #6a8a10"></div>
<div class="t" style="left:1135px;top:899px">Используется</div>
<div class="t" style="left:1135px;top:912px;letter-spacing:-0.3px">1523 мегабайт</div>
<div class="a" style="left:1226px;top:898px;width:14px;height:14px;background:#e8901a;border:1px solid #c07010"></div>
<div class="t" style="left:1243px;top:899px">Изменено</div>
<div class="t" style="left:1243px;top:912px;letter-spacing:-0.3px">38 мегабайт</div>
<div class="a" style="left:1334px;top:898px;width:14px;height:14px;background:#3a7ed0;border:1px solid #2a5ea0"></div>
<div class="t" style="left:1351px;top:899px">Ожидание</div>
<div class="t" style="left:1351px;top:912px;letter-spacing:-0.3px">593 мегабайт</div>
<div class="a" style="left:1442px;top:898px;width:14px;height:14px;background:#b9d0f0;border:1px solid #8aa8d0"></div>
<div class="t" style="left:1459px;top:899px">Свободно</div>
<div class="t" style="left:1459px;top:912px;letter-spacing:-0.3px">30324 мегабайт</div>
<div class="t" style="left:1196px;top:946px">Доступно</div>
<div class="t" style="left:1196px;top:959px">Кэшировано</div>
<div class="t" style="left:1196px;top:972px">Всего</div>
<div class="t" style="left:1196px;top:985px">Установлено</div>
<div class="t" style="left:1260px;top:946px;width:101px;text-align:right;letter-spacing:-0.35px">30917 мегабайт</div>
<div class="t" style="left:1260px;top:959px;width:101px;text-align:right;letter-spacing:-0.35px">631 мегабайт</div>
<div class="t" style="left:1260px;top:972px;width:101px;text-align:right;letter-spacing:-0.35px">32478 мегабайт</div>
<div class="t" style="left:1260px;top:985px;width:101px;text-align:right;letter-spacing:-0.35px">32768 мегабайт</div>

<!-- main left scrollbar -->
<div class="a" style="left:1591px;top:621px;width:15px;height:387px;background:#f5f5f5;border:1px solid #e3e3e3"></div>
<div class="a" style="left:1592px;top:622px;width:13px;height:14px;border:1px solid #d6d6d6;background:#fff"></div>
<svg class="a" style="left:1595px;top:627px" width="7" height="4"><path d="M0 4 L7 4 L3.5 0Z" fill="#777"/></svg>
<div class="a" style="left:1592px;top:993px;width:13px;height:14px;border:1px solid #d6d6d6;background:#fff"></div>
<svg class="a" style="left:1595px;top:998px" width="7" height="4"><path d="M0 0 L7 0 L3.5 4Z" fill="#777"/></svg>
<div class="a" style="left:1608px;top:621px;width:1px;height:388px;background:#d6d6d6"></div>

<!-- right graph panel -->
<div class="a" style="left:1613px;top:622px;width:200px;height:387px;border:1px solid #8c8c8c;border-bottom:none;background:#fff"></div>
<div class="a" style="left:1614px;top:623px;width:198px;height:29px;background:linear-gradient(#fbfbfb 0,#e6e6e6 45%,#c6c6c6 100%);border-bottom:1px solid #9a9a9a"></div>
<svg class="a" style="left:1622px;top:626px" width="21" height="21" viewBox="0 0 21 21"><circle cx="10.5" cy="10.5" r="9" fill="#f4f4f4" stroke="#8a8a8a"/><path d="M8.5 6.5 L12.5 10.5 L8.5 14.5" fill="none" stroke="#1a1a1a" stroke-width="2"/></svg>
<div class="a" style="left:1713px;top:626px;width:86px;height:23px;border:1px solid #c8c8c8;background:linear-gradient(#fdfdfd,#ececec)"></div>
<div class="t" style="left:1737px;top:631px">Вид</div>
<div class="a" style="left:1785px;top:630px;width:1px;height:16px;background:#333"></div>
<svg class="a" style="left:1787px;top:634px" width="9" height="6"><path d="M0 0 L9 0 L4.5 6Z" fill="#111"/></svg>
<div class="t" style="left:1626px;top:658px">Использование физич...</div>
<div class="t" style="left:1752px;top:658px;width:40px;text-align:right;letter-spacing:-0.3px">100%</div>
<div class="a" style="left:1624px;top:673px;width:171px;height:103px;background:#000;border:1px solid #5a5a5a;overflow:hidden"><svg width="171" height="103" style="position:absolute;left:0;top:0"><path d="M166.7 0V103M151.7 0V103M136.7 0V103M121.7 0V103M106.7 0V103M91.7 0V103M76.7 0V103M61.7 0V103M46.7 0V103M31.7 0V103M16.7 0V103M1.7 0V103M0 1.5H171M0 11.6H171M0 21.6H171M0 31.7H171M0 41.8H171M0 51.9H171M0 61.9H171M0 72.0H171M0 82.1H171M0 92.1H171M0 102.2H171" stroke="#648c64" stroke-width="1"/><path d="M113 103 L117 98 L171 98 L171 103Z" fill="#0b5e0b" opacity=".85"/><path d="M113 102 L117 98 L171 98" fill="none" stroke="#3ee03e" stroke-width="1.3"/></svg></div>
<div class="t" style="left:1626px;top:779px">60 секунд</div>
<div class="t" style="left:1752px;top:779px;width:40px;text-align:right;letter-spacing:-0.3px">0%</div>
<div class="t" style="left:1626px;top:796px">Выделение памяти</div>
<div class="t" style="left:1752px;top:796px;width:40px;text-align:right;letter-spacing:-0.3px">100%</div>
<div class="a" style="left:1624px;top:811px;width:171px;height:103px;background:#000;border:1px solid #5a5a5a;overflow:hidden"><svg width="171" height="103" style="position:absolute;left:0;top:0"><path d="M166.7 0V103M151.7 0V103M136.7 0V103M121.7 0V103M106.7 0V103M91.7 0V103M76.7 0V103M61.7 0V103M46.7 0V103M31.7 0V103M16.7 0V103M1.7 0V103M0 1.5H171M0 11.6H171M0 21.6H171M0 31.7H171M0 41.8H171M0 51.9H171M0 61.9H171M0 72.0H171M0 82.1H171M0 92.1H171M0 102.2H171" stroke="#648c64" stroke-width="1"/><path d="M113 103 L117 98 L171 98 L171 103Z" fill="#0b5e0b" opacity=".85"/><path d="M113 102 L117 98 L171 98" fill="none" stroke="#3ee03e" stroke-width="1.3"/></svg></div>
<div class="t" style="left:1752px;top:917px;width:40px;text-align:right;letter-spacing:-0.3px">0%</div>
<div class="t" style="left:1626px;top:934px;letter-spacing:-0.2px">Ошибок страницы физи... 100</div>
<div class="a" style="left:1624px;top:949px;width:171px;height:62px;background:#000;border:1px solid #5a5a5a;overflow:hidden"><svg width="171" height="62" style="position:absolute;left:0;top:0"><path d="M166.7 0V62M151.7 0V62M136.7 0V62M121.7 0V62M106.7 0V62M91.7 0V62M76.7 0V62M61.7 0V62M46.7 0V62M31.7 0V62M16.7 0V62M1.7 0V62M0 1.5H171M0 11.6H171M0 21.6H171M0 31.7H171M0 41.8H171M0 51.9H171M0 61.9H171" stroke="#648c64" stroke-width="1"/></svg></div>
<svg class="a" style="left:1795px;top:662px" width="10" height="350"><path d="M2 2 H7 V123 H2 M2 140 H7 V261 H2 M2 278 H7 V350" fill="none" stroke="#222" stroke-width="1.2"/></svg>
<div class="a" style="left:1813px;top:1008px;width:20px;height:6px;background:#c3d3e4"></div>
<div class="a" style="left:1613px;top:1009px;width:200px;height:5px;background:#c3d3e4"></div>
<!-- right outer scrollbar -->
<div class="a" style="left:1815px;top:621px;width:15px;height:387px;background:#f5f5f5;border:1px solid #e3e3e3"></div>
<div class="a" style="left:1816px;top:622px;width:13px;height:14px;border:1px solid #d6d6d6;background:#fff"></div>
<svg class="a" style="left:1819px;top:627px" width="7" height="4"><path d="M0 4 L7 4 L3.5 0Z" fill="#777"/></svg>
<div class="a" style="left:1816px;top:638px;width:13px;height:301px;border:1px solid #d6d6d6;background:linear-gradient(90deg,#f2f2f2,#e9e9e9)"></div>
<div class="a" style="left:1819px;top:786px;width:7px;height:4px;border-top:1px solid #999;border-bottom:1px solid #999"></div>
<div class="a" style="left:1816px;top:993px;width:13px;height:14px;border:1px solid #d6d6d6;background:#fff"></div>
<svg class="a" style="left:1819px;top:998px" width="7" height="4"><path d="M0 0 L7 0 L3.5 4Z" fill="#777"/></svg>


</body></html>
